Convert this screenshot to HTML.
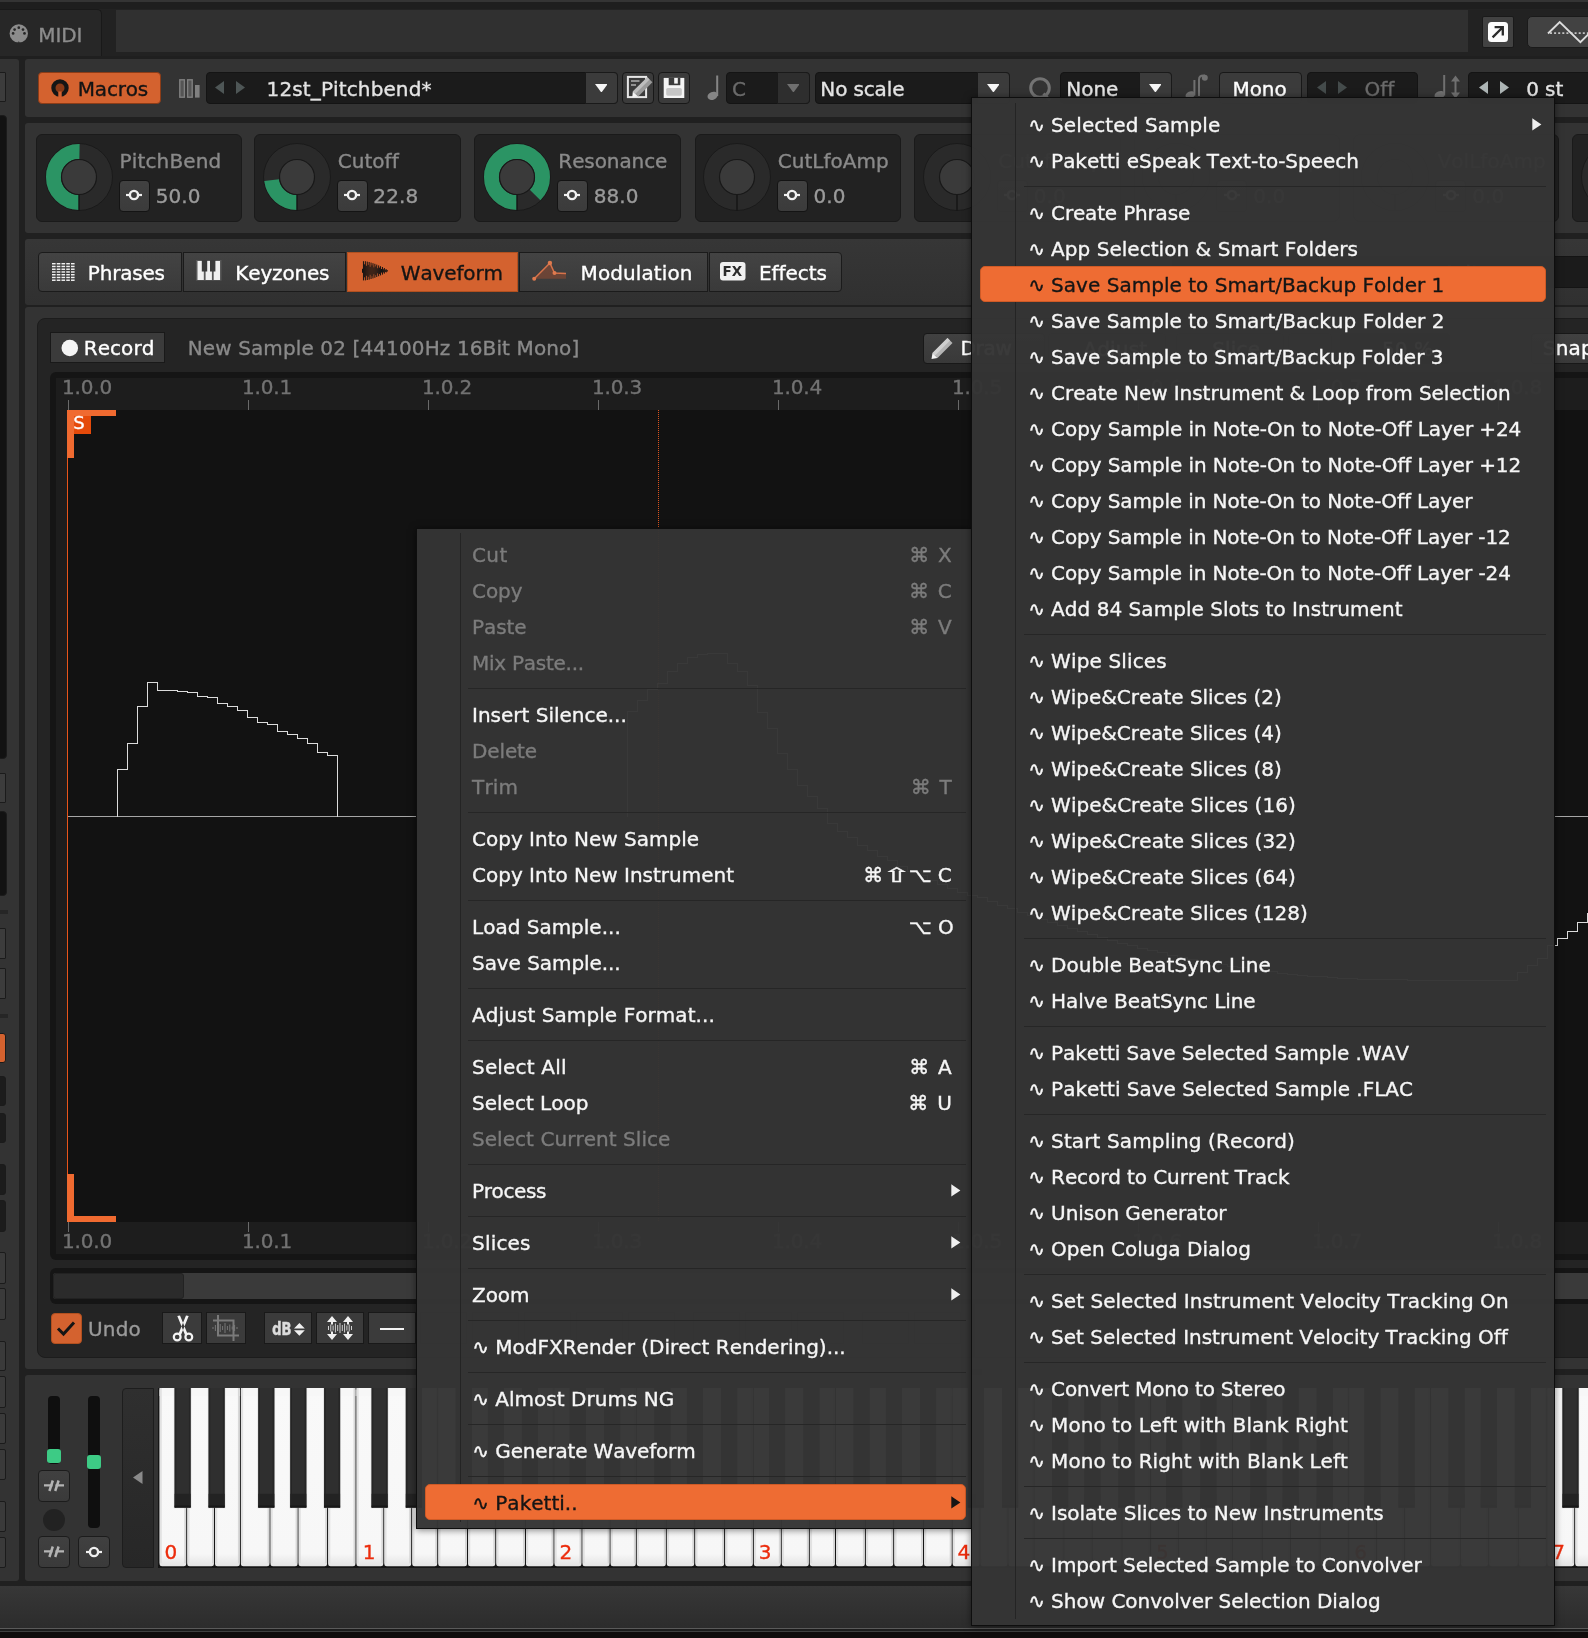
<!DOCTYPE html>
<html><head><meta charset="utf-8"><title>Renoise Sample Editor</title>
<style>
html,body{margin:0;padding:0;background:#202020;}
body{width:1588px;height:1638px;position:relative;overflow:hidden;font-family:"DejaVu Sans","Liberation Sans",sans-serif;}
#root{position:absolute;left:0;top:0;width:1588px;height:1638px;overflow:hidden;will-change:transform;-webkit-font-smoothing:antialiased;}
#root div,#root span,#root svg{position:absolute;box-sizing:border-box;}
.t{white-space:pre;line-height:24px;font-size:20px;font-kerning:none;-webkit-text-stroke:0.35px;}
.menu{background:rgba(52,52,52,0.972);border:1px solid #0e0e0e;box-shadow:0 1px 7px rgba(0,0,0,0.5);}
.sep{height:1px;background:#262626;}
</style></head><body><div id="root">

<div style="left:0px;top:0px;width:1588px;height:2px;background:#343434;"></div>
<div style="left:0px;top:2px;width:1588px;height:7px;background:#1e1e1e;"></div>
<div style="left:0px;top:9px;width:1588px;height:50px;background:#222222;"></div>
<div style="left:0px;top:56px;width:1588px;height:3px;background:#1f1f1f;"></div>
<div style="left:-2px;top:9px;width:103.5px;height:47px;background:#272727;border:1px solid #191919;border-bottom:none;border-radius:0 5px 0 0;"></div>
<svg style="left:8px;top:23px;" width="22" height="22" viewBox="0 0 22 22"><circle cx="10.8" cy="10.4" r="9.2" fill="#8c8c8c"/><path d="M9.6 19.8 L10.8 18.2 L12 19.8 Z" fill="#272727"/><circle cx="5.1" cy="10.4" r="1.35" fill="#272727"/><circle cx="6.6" cy="6.6" r="1.35" fill="#272727"/><circle cx="10.8" cy="4.7" r="1.35" fill="#272727"/><circle cx="15.0" cy="6.6" r="1.35" fill="#272727"/><circle cx="16.5" cy="10.4" r="1.35" fill="#272727"/></svg>
<span class="t" style="left:38.34px;top:23.08px;color:#8c8c8c;font-size:20px;letter-spacing:-0.113px;">MIDI</span>
<div style="left:116px;top:10px;width:1352px;height:42px;background:#303030;"></div>
<div style="left:1482.3px;top:16px;width:31.7px;height:32px;background:#424242;border:1px solid #1a1a1a;border-radius:2px;"></div>
<svg style="left:1487px;top:21px;" width="22" height="22" viewBox="0 0 22 22"><rect x="1" y="1" width="20" height="20" rx="3.5" fill="#fcfcfc"/><path d="M5.6 16.4 L15 7 M7.6 6.2 H15.8 V14.4" stroke="#2a2a2a" stroke-width="2.3" fill="none"/></svg>
<div style="left:1526.5px;top:16px;width:70px;height:32px;background:#424242;border:1px solid #1a1a1a;border-radius:5px;"></div>
<svg style="left:1545px;top:20px;" width="43" height="26" viewBox="0 0 43 26"><path d="M5 13.2 H43" stroke="#c4c4c4" stroke-width="1.8" stroke-dasharray="2 2.1"/><path d="M3 13.5 L14.7 2 L35.4 22.2 L43.5 14.3" stroke="#dcdcdc" stroke-width="1.9" fill="none"/></svg>
<div style="left:-2px;top:59px;width:21px;height:1521.5px;background:#333333;border-radius:0 3px 3px 0;"></div>
<div style="left:-3px;top:72px;width:9px;height:30px;background:#3c3c3c;border-radius:1px;border:1px solid #1b1b1b;"></div>
<div style="left:-3px;top:115px;width:10px;height:644px;background:#121212;border-radius:4px;border:1px solid #1b1b1b;"></div>
<div style="left:-3px;top:772.5px;width:9px;height:30.0px;background:#3c3c3c;border-radius:1px;border:1px solid #1b1b1b;"></div>
<div style="left:-3px;top:811px;width:10px;height:85px;background:#121212;border-radius:4px;border:1px solid #1b1b1b;"></div>
<div style="left:0px;top:910px;width:8px;height:4px;background:#262626;"></div>
<div style="left:-3px;top:928px;width:9px;height:31px;background:#3c3c3c;border-radius:1px;border:1px solid #1b1b1b;"></div>
<div style="left:-3px;top:968px;width:9px;height:31px;background:#3c3c3c;border-radius:1px;border:1px solid #1b1b1b;"></div>
<div style="left:0px;top:1014px;width:8px;height:4px;background:#262626;"></div>
<div style="left:-3px;top:1032.5px;width:8.5px;height:30.0px;background:#d4622f;border-radius:3px;border:1px solid #1b1b1b;"></div>
<div style="left:-3px;top:1076px;width:9px;height:30px;background:#1c1c1c;border-radius:3px;border:1px solid #1b1b1b;"></div>
<div style="left:-3px;top:1113px;width:9px;height:30px;background:#1c1c1c;border-radius:3px;border:1px solid #1b1b1b;"></div>
<div style="left:-3px;top:1164px;width:9px;height:31px;background:#1c1c1c;border-radius:3px;border:1px solid #1b1b1b;"></div>
<div style="left:-3px;top:1200px;width:9px;height:31.5px;background:#1c1c1c;border-radius:3px;border:1px solid #1b1b1b;"></div>
<div style="left:-3px;top:1252px;width:8.5px;height:31.5px;background:#3a3a3a;border-radius:2px;border:1px solid #1b1b1b;"></div>
<div style="left:-3px;top:1288px;width:8.5px;height:32px;background:#3a3a3a;border-radius:2px;border:1px solid #1b1b1b;"></div>
<div style="left:-3px;top:1341px;width:8.5px;height:30px;background:#3a3a3a;border-radius:2px;border:1px solid #1b1b1b;"></div>
<div style="left:-3px;top:1376px;width:8.5px;height:31.5px;background:#3a3a3a;border-radius:2px;border:1px solid #1b1b1b;"></div>
<div style="left:-3px;top:1412.5px;width:8.5px;height:31.5px;background:#3a3a3a;border-radius:2px;border:1px solid #1b1b1b;"></div>
<div style="left:-3px;top:1449px;width:8.5px;height:31px;background:#3a3a3a;border-radius:2px;border:1px solid #1b1b1b;"></div>
<div style="left:-3px;top:1500.5px;width:8.5px;height:31.0px;background:#3a3a3a;border-radius:2px;border:1px solid #1b1b1b;"></div>
<div style="left:-3px;top:1537px;width:8.5px;height:31px;background:#3a3a3a;border-radius:2px;border:1px solid #1b1b1b;"></div>
<div style="left:25px;top:59px;width:1570px;height:58px;background:#333333;border-radius:3px 0 0 3px;"></div>
<div style="left:25px;top:123px;width:1570px;height:110px;background:#333333;border-radius:3px 0 0 3px;"></div>
<div style="left:25px;top:239px;width:1570px;height:66.2px;background:linear-gradient(#363636,#303030);border-radius:3px 0 0 3px;"></div>
<div style="left:25px;top:306.8px;width:1570px;height:1062.2px;background:#333333;border-radius:3px 0 0 3px;"></div>
<div style="left:25px;top:1375px;width:1570px;height:205.5px;background:#333333;border-radius:3px 0 0 3px;"></div>
<div style="left:0px;top:1585.6px;width:1588px;height:42.6px;background:linear-gradient(#373737,#2c2c2c);"></div>
<div style="left:0px;top:1628px;width:1588px;height:1.4px;background:#5a5a5a;"></div>
<div style="left:0px;top:1629.4px;width:1588px;height:1.6px;background:#1c1c1c;"></div>
<div style="left:0px;top:1631px;width:1588px;height:1.3px;background:#404040;"></div>
<div style="left:0px;top:1632.3px;width:1588px;height:6px;background:#100c0c;"></div>
<div style="left:38.3px;top:72px;width:123px;height:31.6px;background:#d4622f;border-radius:4px;border:1px solid #8c3c17;"></div>
<svg style="left:50px;top:78px;" width="20" height="22" viewBox="0 0 20 22"><circle cx="10" cy="10" r="6.6" fill="#8a3a17" stroke="#151515" stroke-width="4.2"/><rect x="8.3" y="13.5" width="3.4" height="6.5" fill="#d4622f"/></svg>
<span class="t" style="left:77.84px;top:77.08px;color:#141414;font-size:20px;letter-spacing:-0.231px;">Macros</span>
<svg style="left:179px;top:79px;" width="22" height="20" viewBox="0 0 22 20"><rect x="0.8" y="0.8" width="4.6" height="17.4" fill="#555" stroke="#808080" stroke-width="1.4"/><rect x="8.6" y="0.8" width="4.6" height="17.4" fill="#555" stroke="#808080" stroke-width="1.4"/><rect x="16" y="6" width="4.6" height="12.6" fill="#808080"/></svg>
<div style="left:206px;top:72px;width:412px;height:32px;background:#1b1b1b;border-radius:4px;border:1px solid #141414;"></div>
<svg style="left:215px;top:81.0px;" width="9" height="13" viewBox="0 0 9 13"><path d="M9 0 L0 6.5 L9 13 Z" fill="#4e5656"/></svg>
<svg style="left:235.5px;top:81.0px;" width="9" height="13" viewBox="0 0 9 13"><path d="M0 0 L9 6.5 L0 13 Z" fill="#4e5656"/></svg>
<span class="t" style="left:266.6px;top:77.08px;color:#e4e4e4;font-size:20px;letter-spacing:0.119px;">12st_Pitchbend*</span>
<div style="left:585.3px;top:72px;width:32.7px;height:32px;background:#3b3b3b;border-radius:0 4px 4px 0;border:1px solid #1a1a1a;"></div>
<svg style="left:594.6px;top:83.8px;" width="12.8" height="8.6" viewBox="0 0 12.8 8.6"><path d="M0 0 H12.8 L6.4 8.6 Z" fill="#f6f6f6"/></svg>
<div style="left:621.8px;top:72px;width:32.2px;height:32px;background:#3b3b3b;border-radius:4px;border:1px solid #181818;"></div>
<svg style="left:626px;top:75px;" width="27" height="25" viewBox="0 0 27 25"><rect x="1.9" y="1.9" width="18.2" height="20.2" fill="#3a3a3a" stroke="#e6e6e6" stroke-width="2"/><path d="M5 6 H13.5 M5 10 H10" stroke="#b0b0b0" stroke-width="1.7"/><path d="M21.3 2.2 L26.4 7.3 L12.2 21.5 L6.8 16.4 Z" fill="#9a9a9a"/><path d="M21.3 2.2 L23.6 4.5 L9.4 18.7 L6.8 16.4 Z" fill="#bdbdbd"/><path d="M6.8 16.4 L12.2 21.5 L6.3 22.2 Z" fill="#f4f4f4"/></svg>
<div style="left:657.6px;top:72px;width:32.4px;height:32px;background:#3b3b3b;border-radius:4px;border:1px solid #181818;"></div>
<svg style="left:663px;top:77px;" width="22" height="22" viewBox="0 0 22 22"><path d="M0.7 0.9 H21.3 V21 H0.7 Z" fill="#f4f4f4"/><rect x="5.7" y="0.9" width="11.6" height="7.3" fill="#3b3b3b"/><rect x="11.2" y="0.9" width="3.6" height="5.7" fill="#f4f4f4"/><rect x="3.2" y="11" width="15.6" height="7.7" rx="1.6" fill="#c6c6c6"/></svg>
<svg style="left:707px;top:74.5px;" width="16" height="26" viewBox="0 0 16 26"><ellipse cx="5.6" cy="20.8" rx="5.2" ry="3.9" transform="rotate(-22 5.6 20.8)" fill="#858585"/><rect x="9.2" y="0.5" width="2" height="20.5" fill="#858585"/></svg>
<div style="left:726px;top:72px;width:84px;height:32px;background:#1b1b1b;border-radius:4px;border:1px solid #141414;"></div>
<span class="t" style="left:731.88px;top:77.08px;color:#6a6a6a;font-size:20px;letter-spacing:0.035px;">C</span>
<div style="left:777.4px;top:72px;width:32.6px;height:32px;background:#2e2e2e;border-radius:0 4px 4px 0;border:1px solid #1a1a1a;"></div>
<svg style="left:786.6px;top:83.8px;" width="12.8" height="8.6" viewBox="0 0 12.8 8.6"><path d="M0 0 H12.8 L6.4 8.6 Z" fill="#707070"/></svg>
<div style="left:814.5px;top:72px;width:195.5px;height:32px;background:#1b1b1b;border-radius:4px;border:1px solid #141414;"></div>
<span class="t" style="left:820.34px;top:77.08px;color:#e4e4e4;font-size:20px;letter-spacing:-0.136px;">No scale</span>
<div style="left:977.4px;top:72px;width:32.6px;height:32px;background:#3b3b3b;border-radius:0 4px 4px 0;border:1px solid #1a1a1a;"></div>
<svg style="left:986.6px;top:83.8px;" width="12.8" height="8.6" viewBox="0 0 12.8 8.6"><path d="M0 0 H12.8 L6.4 8.6 Z" fill="#f6f6f6"/></svg>
<svg style="left:1028px;top:76px;" width="26" height="26" viewBox="0 0 26 26"><circle cx="12" cy="12" r="9.3" stroke="#737373" stroke-width="3" fill="none"/><path d="M15.5 17.5 L22 24.5" stroke="#737373" stroke-width="3"/></svg>
<div style="left:1060px;top:72px;width:112px;height:32px;background:#1b1b1b;border-radius:4px;border:1px solid #141414;"></div>
<span class="t" style="left:1066.34px;top:77.08px;color:#e4e4e4;font-size:20px;letter-spacing:-0.044px;">None</span>
<div style="left:1139.4px;top:72px;width:32.6px;height:32px;background:#3b3b3b;border-radius:0 4px 4px 0;border:1px solid #1a1a1a;"></div>
<svg style="left:1148.6px;top:83.8px;" width="12.8" height="8.6" viewBox="0 0 12.8 8.6"><path d="M0 0 H12.8 L6.4 8.6 Z" fill="#f6f6f6"/></svg>
<svg style="left:1185px;top:74px;" width="26" height="28" viewBox="0 0 26 28"><ellipse cx="5.2" cy="21" rx="4.8" ry="3.6" transform="rotate(-22 5.2 21)" fill="#707070"/><rect x="8.4" y="6" width="2" height="15.5" fill="#707070"/><path d="M14 22 V5.5 Q14 1.5 18.5 1.5 H20" stroke="#707070" stroke-width="2" fill="none"/><circle cx="19.8" cy="3.8" r="3" fill="#707070"/></svg>
<div style="left:1218.5px;top:72px;width:83.5px;height:32px;background:#3b3b3b;border-radius:4px;border:1px solid #181818;"></div>
<span class="t" style="left:1232.54px;top:77.08px;color:#ffffff;font-size:20px;letter-spacing:-0.101px;">Mono</span>
<div style="left:1307px;top:72px;width:111px;height:32px;background:#1b1b1b;border-radius:4px;border:1px solid #141414;"></div>
<svg style="left:1317px;top:81.0px;" width="9" height="13" viewBox="0 0 9 13"><path d="M9 0 L0 6.5 L9 13 Z" fill="#444b4b"/></svg>
<svg style="left:1337.5px;top:81.0px;" width="9" height="13" viewBox="0 0 9 13"><path d="M0 0 L9 6.5 L0 13 Z" fill="#444b4b"/></svg>
<span class="t" style="left:1364.38px;top:77.08px;color:#6a6a6a;font-size:20px;letter-spacing:0.059px;">Off</span>
<svg style="left:1434px;top:74px;" width="30" height="28" viewBox="0 0 30 28"><ellipse cx="5.6" cy="21" rx="5.2" ry="3.9" transform="rotate(-22 5.6 21)" fill="#707070"/><rect x="9.2" y="1" width="2" height="20.5" fill="#707070"/><path d="M21.5 4 V22" stroke="#707070" stroke-width="2"/><path d="M17 7.5 L21.5 1.5 L26 7.5 Z M17 18.5 L21.5 24.5 L26 18.5 Z" fill="#707070"/></svg>
<div style="left:1468px;top:72px;width:130px;height:32px;background:#1b1b1b;border-radius:4px;border:1px solid #141414;"></div>
<svg style="left:1479px;top:81.0px;" width="9" height="13" viewBox="0 0 9 13"><path d="M9 0 L0 6.5 L9 13 Z" fill="#aeb6b6"/></svg>
<svg style="left:1499.5px;top:81.0px;" width="9" height="13" viewBox="0 0 9 13"><path d="M0 0 L9 6.5 L0 13 Z" fill="#aeb6b6"/></svg>
<span class="t" style="left:1526.18px;top:77.08px;color:#e4e4e4;font-size:20px;letter-spacing:-0.086px;">0 st</span>
<div style="left:36.2px;top:133.8px;width:205.8px;height:88px;background:#222222;border-radius:6px;border:1px solid #1a1a1a;"></div>
<svg style="left:38.8px;top:136.7px;" width="80" height="80" viewBox="0 0 80 80"><circle cx="40" cy="40" r="33.5" fill="#2a2a2a" stroke="#1a1a1a" stroke-width="1"/><circle cx="40" cy="40" r="25.5" fill="none" stroke="#2b9464" stroke-width="15.0" stroke-dasharray="80.11 160.22" transform="rotate(90 40 40)"/><path d="M40 57.5 V73.5" stroke="#151515" stroke-width="1.4"/><circle cx="40" cy="40" r="17.5" fill="#3a3a3a" stroke="#181818" stroke-width="1.2"/></svg>
<span class="t" style="left:119.44px;top:149.08px;color:#8a8a8a;font-size:20px;letter-spacing:0.164px;">PitchBend</span>
<div style="left:118.5px;top:180.3px;width:31.2px;height:31.3px;background:linear-gradient(#414141,#3b3b3b);border-radius:4px;border:1px solid #141414;"></div>
<svg style="left:123.1px;top:187.9px;" width="22" height="14" viewBox="0 0 22 14"><path d="M3 7 H19" stroke="#f0f0f0" stroke-width="2.2"/><circle cx="11" cy="7" r="4.1" fill="#3b3b3b" stroke="#f0f0f0" stroke-width="2.4"/></svg>
<span class="t" style="left:155.66px;top:184.08px;color:#9a9a9a;font-size:20px;letter-spacing:0.117px;">50.0</span>
<div style="left:254.2px;top:133.8px;width:207.3px;height:88px;background:#222222;border-radius:6px;border:1px solid #1a1a1a;"></div>
<svg style="left:256.8px;top:136.7px;" width="80" height="80" viewBox="0 0 80 80"><circle cx="40" cy="40" r="33.5" fill="#2a2a2a" stroke="#1a1a1a" stroke-width="1"/><circle cx="40" cy="40" r="25.5" fill="none" stroke="#2b9464" stroke-width="15.0" stroke-dasharray="36.53 160.22" transform="rotate(90 40 40)"/><path d="M40 57.5 V73.5" stroke="#151515" stroke-width="1.4"/><circle cx="40" cy="40" r="17.5" fill="#3a3a3a" stroke="#181818" stroke-width="1.2"/></svg>
<span class="t" style="left:337.78px;top:149.08px;color:#8a8a8a;font-size:20px;letter-spacing:0.033px;">Cutoff</span>
<div style="left:336.5px;top:180.3px;width:31.2px;height:31.3px;background:linear-gradient(#414141,#3b3b3b);border-radius:4px;border:1px solid #141414;"></div>
<svg style="left:341.1px;top:187.9px;" width="22" height="14" viewBox="0 0 22 14"><path d="M3 7 H19" stroke="#f0f0f0" stroke-width="2.2"/><circle cx="11" cy="7" r="4.1" fill="#3b3b3b" stroke="#f0f0f0" stroke-width="2.4"/></svg>
<span class="t" style="left:373.34px;top:184.08px;color:#9a9a9a;font-size:20px;letter-spacing:0.117px;">22.8</span>
<div style="left:474.2px;top:133.8px;width:206.8px;height:88px;background:#222222;border-radius:6px;border:1px solid #1a1a1a;"></div>
<svg style="left:476.79999999999995px;top:136.7px;" width="80" height="80" viewBox="0 0 80 80"><circle cx="40" cy="40" r="33.5" fill="#2a2a2a" stroke="#1a1a1a" stroke-width="1"/><circle cx="40" cy="40" r="25.5" fill="none" stroke="#2b9464" stroke-width="15.0" stroke-dasharray="139.23 160.22" transform="rotate(90 40 40)"/><path d="M40 57.5 V73.5" stroke="#151515" stroke-width="1.4"/><circle cx="40" cy="40" r="17.5" fill="#3a3a3a" stroke="#181818" stroke-width="1.2"/></svg>
<span class="t" style="left:558.34px;top:149.08px;color:#8a8a8a;font-size:20px;letter-spacing:-0.085px;">Resonance</span>
<div style="left:556.5px;top:180.3px;width:31.2px;height:31.3px;background:linear-gradient(#414141,#3b3b3b);border-radius:4px;border:1px solid #141414;"></div>
<svg style="left:561.1px;top:187.9px;" width="22" height="14" viewBox="0 0 22 14"><path d="M3 7 H19" stroke="#f0f0f0" stroke-width="2.2"/><circle cx="11" cy="7" r="4.1" fill="#3b3b3b" stroke="#f0f0f0" stroke-width="2.4"/></svg>
<span class="t" style="left:593.64px;top:184.08px;color:#9a9a9a;font-size:20px;letter-spacing:0.117px;">88.0</span>
<div style="left:694.5px;top:133.8px;width:206.8px;height:88px;background:#222222;border-radius:6px;border:1px solid #1a1a1a;"></div>
<svg style="left:697.0999999999999px;top:136.7px;" width="80" height="80" viewBox="0 0 80 80"><circle cx="40" cy="40" r="33.5" fill="#2a2a2a" stroke="#1a1a1a" stroke-width="1"/><path d="M40 57.5 V73.5" stroke="#151515" stroke-width="1.4"/><circle cx="40" cy="40" r="17.5" fill="#3a3a3a" stroke="#181818" stroke-width="1.2"/></svg>
<span class="t" style="left:777.78px;top:149.08px;color:#8a8a8a;font-size:20px;letter-spacing:0.026px;">CutLfoAmp</span>
<div style="left:776.8px;top:180.3px;width:31.2px;height:31.3px;background:linear-gradient(#414141,#3b3b3b);border-radius:4px;border:1px solid #141414;"></div>
<svg style="left:781.4px;top:187.9px;" width="22" height="14" viewBox="0 0 22 14"><path d="M3 7 H19" stroke="#f0f0f0" stroke-width="2.2"/><circle cx="11" cy="7" r="4.1" fill="#3b3b3b" stroke="#f0f0f0" stroke-width="2.4"/></svg>
<span class="t" style="left:813.58px;top:184.08px;color:#9a9a9a;font-size:20px;letter-spacing:0.064px;">0.0</span>
<div style="left:914.2px;top:133.8px;width:206.8px;height:88px;background:#222222;border-radius:6px;border:1px solid #1a1a1a;"></div>
<svg style="left:916.8px;top:136.7px;" width="80" height="80" viewBox="0 0 80 80"><circle cx="40" cy="40" r="33.5" fill="#2a2a2a" stroke="#1a1a1a" stroke-width="1"/><path d="M40 57.5 V73.5" stroke="#151515" stroke-width="1.4"/><circle cx="40" cy="40" r="17.5" fill="#3a3a3a" stroke="#181818" stroke-width="1.2"/></svg>
<span class="t" style="left:998.18px;top:149.08px;color:#8a8a8a;font-size:20px;letter-spacing:0.075px;">CutLfoFrq</span>
<div style="left:996.5px;top:180.3px;width:31.2px;height:31.3px;background:linear-gradient(#414141,#3b3b3b);border-radius:4px;border:1px solid #141414;"></div>
<svg style="left:1001.1px;top:187.9px;" width="22" height="14" viewBox="0 0 22 14"><path d="M3 7 H19" stroke="#f0f0f0" stroke-width="2.2"/><circle cx="11" cy="7" r="4.1" fill="#3b3b3b" stroke="#f0f0f0" stroke-width="2.4"/></svg>
<span class="t" style="left:1033.68px;top:184.08px;color:#9a9a9a;font-size:20px;letter-spacing:0.064px;">0.0</span>
<div style="left:1133.7px;top:133.8px;width:206.8px;height:88px;background:#222222;border-radius:6px;border:1px solid #1a1a1a;"></div>
<svg style="left:1136.3px;top:136.7px;" width="80" height="80" viewBox="0 0 80 80"><circle cx="40" cy="40" r="33.5" fill="#2a2a2a" stroke="#1a1a1a" stroke-width="1"/><path d="M40 57.5 V73.5" stroke="#151515" stroke-width="1.4"/><circle cx="40" cy="40" r="17.5" fill="#3a3a3a" stroke="#181818" stroke-width="1.2"/></svg>
<span class="t" style="left:1218.64px;top:149.08px;color:#8a8a8a;font-size:20px;letter-spacing:0.076px;">VolLfoFrq</span>
<div style="left:1216.0px;top:180.3px;width:31.2px;height:31.3px;background:linear-gradient(#414141,#3b3b3b);border-radius:4px;border:1px solid #141414;"></div>
<svg style="left:1220.6px;top:187.9px;" width="22" height="14" viewBox="0 0 22 14"><path d="M3 7 H19" stroke="#f0f0f0" stroke-width="2.2"/><circle cx="11" cy="7" r="4.1" fill="#3b3b3b" stroke="#f0f0f0" stroke-width="2.4"/></svg>
<span class="t" style="left:1253.18px;top:184.08px;color:#9a9a9a;font-size:20px;letter-spacing:0.064px;">0.0</span>
<div style="left:1352.7px;top:133.8px;width:206.8px;height:88px;background:#222222;border-radius:6px;border:1px solid #1a1a1a;"></div>
<svg style="left:1355.3px;top:136.7px;" width="80" height="80" viewBox="0 0 80 80"><circle cx="40" cy="40" r="33.5" fill="#2a2a2a" stroke="#1a1a1a" stroke-width="1"/><path d="M40 57.5 V73.5" stroke="#151515" stroke-width="1.4"/><circle cx="40" cy="40" r="17.5" fill="#3a3a3a" stroke="#181818" stroke-width="1.2"/></svg>
<span class="t" style="left:1437.64px;top:149.08px;color:#8a8a8a;font-size:20px;letter-spacing:0.027px;">VolLfoAmp</span>
<div style="left:1435.0px;top:180.3px;width:31.2px;height:31.3px;background:linear-gradient(#414141,#3b3b3b);border-radius:4px;border:1px solid #141414;"></div>
<svg style="left:1439.6px;top:187.9px;" width="22" height="14" viewBox="0 0 22 14"><path d="M3 7 H19" stroke="#f0f0f0" stroke-width="2.2"/><circle cx="11" cy="7" r="4.1" fill="#3b3b3b" stroke="#f0f0f0" stroke-width="2.4"/></svg>
<span class="t" style="left:1472.18px;top:184.08px;color:#9a9a9a;font-size:20px;letter-spacing:0.064px;">0.0</span>
<div style="left:1572.2px;top:133.8px;width:206.8px;height:88px;background:#222222;border-radius:6px;border:1px solid #1a1a1a;"></div>
<svg style="left:1574.8px;top:136.7px;" width="80" height="80" viewBox="0 0 80 80"><circle cx="40" cy="40" r="33.5" fill="#2a2a2a" stroke="#1a1a1a" stroke-width="1"/><path d="M40 57.5 V73.5" stroke="#151515" stroke-width="1.4"/><circle cx="40" cy="40" r="17.5" fill="#3a3a3a" stroke="#181818" stroke-width="1.2"/></svg>
<span class="t" style="left:1655.34px;top:149.08px;color:#8a8a8a;font-size:20px;letter-spacing:-0.064px;">Drive</span>
<div style="left:1654.5px;top:180.3px;width:31.2px;height:31.3px;background:linear-gradient(#414141,#3b3b3b);border-radius:4px;border:1px solid #141414;"></div>
<svg style="left:1659.1px;top:187.9px;" width="22" height="14" viewBox="0 0 22 14"><path d="M3 7 H19" stroke="#f0f0f0" stroke-width="2.2"/><circle cx="11" cy="7" r="4.1" fill="#3b3b3b" stroke="#f0f0f0" stroke-width="2.4"/></svg>
<span class="t" style="left:1691.68px;top:184.08px;color:#9a9a9a;font-size:20px;letter-spacing:0.064px;">0.0</span>
<div style="left:38px;top:251.8px;width:143.5px;height:40.2px;background:linear-gradient(#434343,#3a3a3a);border-radius:4px 0 0 4px;border:1px solid #1b1b1b;"></div>
<div style="left:182.5px;top:251.8px;width:163.5px;height:40.2px;background:linear-gradient(#434343,#3a3a3a);border:1px solid #1b1b1b;"></div>
<div style="left:346.5px;top:251.8px;width:171.5px;height:40.2px;background:#d4622f;border:1px solid #b2501f;"></div>
<div style="left:518.5px;top:251.8px;width:189px;height:40.2px;background:linear-gradient(#434343,#3a3a3a);border:1px solid #1b1b1b;"></div>
<div style="left:708.5px;top:251.8px;width:133px;height:40.2px;background:linear-gradient(#434343,#3a3a3a);border-radius:0 4px 4px 0;border:1px solid #1b1b1b;"></div>
<svg style="left:51.8px;top:262.9px;" width="24" height="20" viewBox="0 0 24 20"><rect x="0.00" y="0.00" width="3.6" height="1.45" fill="#f2f2f2"/><rect x="4.75" y="0.00" width="3.6" height="1.45" fill="#f2f2f2"/><rect x="9.50" y="0.00" width="3.6" height="1.45" fill="#f2f2f2"/><rect x="14.25" y="0.00" width="3.6" height="1.45" fill="#f2f2f2"/><rect x="19.00" y="0.00" width="3.6" height="1.45" fill="#f2f2f2"/><rect x="0.00" y="2.75" width="3.6" height="1.45" fill="#f2f2f2"/><rect x="4.75" y="2.75" width="3.6" height="1.45" fill="#f2f2f2"/><rect x="9.50" y="2.75" width="3.6" height="1.45" fill="#f2f2f2"/><rect x="14.25" y="2.75" width="3.6" height="1.45" fill="#f2f2f2"/><rect x="19.00" y="2.75" width="3.6" height="1.45" fill="#f2f2f2"/><rect x="0.00" y="5.50" width="3.6" height="1.45" fill="#f2f2f2"/><rect x="4.75" y="5.50" width="3.6" height="1.45" fill="#f2f2f2"/><rect x="9.50" y="5.50" width="3.6" height="1.45" fill="#f2f2f2"/><rect x="14.25" y="5.50" width="3.6" height="1.45" fill="#f2f2f2"/><rect x="19.00" y="5.50" width="3.6" height="1.45" fill="#f2f2f2"/><rect x="0.00" y="8.25" width="3.6" height="1.45" fill="#f2f2f2"/><rect x="4.75" y="8.25" width="3.6" height="1.45" fill="#f2f2f2"/><rect x="9.50" y="8.25" width="3.6" height="1.45" fill="#f2f2f2"/><rect x="14.25" y="8.25" width="3.6" height="1.45" fill="#f2f2f2"/><rect x="19.00" y="8.25" width="3.6" height="1.45" fill="#f2f2f2"/><rect x="0.00" y="11.00" width="3.6" height="1.45" fill="#f2f2f2"/><rect x="4.75" y="11.00" width="3.6" height="1.45" fill="#f2f2f2"/><rect x="9.50" y="11.00" width="3.6" height="1.45" fill="#f2f2f2"/><rect x="14.25" y="11.00" width="3.6" height="1.45" fill="#f2f2f2"/><rect x="19.00" y="11.00" width="3.6" height="1.45" fill="#f2f2f2"/><rect x="0.00" y="13.75" width="3.6" height="1.45" fill="#f2f2f2"/><rect x="4.75" y="13.75" width="3.6" height="1.45" fill="#f2f2f2"/><rect x="9.50" y="13.75" width="3.6" height="1.45" fill="#f2f2f2"/><rect x="14.25" y="13.75" width="3.6" height="1.45" fill="#f2f2f2"/><rect x="19.00" y="13.75" width="3.6" height="1.45" fill="#f2f2f2"/><rect x="0.00" y="16.50" width="3.6" height="1.45" fill="#f2f2f2"/><rect x="4.75" y="16.50" width="3.6" height="1.45" fill="#f2f2f2"/><rect x="9.50" y="16.50" width="3.6" height="1.45" fill="#f2f2f2"/><rect x="14.25" y="16.50" width="3.6" height="1.45" fill="#f2f2f2"/><rect x="19.00" y="16.50" width="3.6" height="1.45" fill="#f2f2f2"/></svg>
<span class="t" style="left:87.84px;top:261.08px;color:#ffffff;font-size:20px;letter-spacing:-0.194px;">Phrases</span>
<svg style="left:196px;top:260px;" width="26" height="22" viewBox="0 0 26 22"><rect x="0" y="0" width="25.5" height="20.6" fill="#595959"/><rect x="1.5" y="1" width="6.3" height="19" fill="#f0f0f0"/><rect x="9.6" y="1" width="6.3" height="19" fill="#f0f0f0"/><rect x="17.7" y="1" width="6.3" height="19" fill="#f0f0f0"/><rect x="5.8" y="0" width="5.4" height="11.5" fill="#3b3b3b"/><rect x="14" y="0" width="5.4" height="11.5" fill="#3b3b3b"/></svg>
<span class="t" style="left:235.34px;top:261.08px;color:#ffffff;font-size:20px;letter-spacing:-0.174px;">Keyzones</span>
<svg style="left:362px;top:261.3px;" width="27" height="21" viewBox="0 0 27 21"><rect x="0.00" y="7.8" width="1.0" height="4.0" fill="#131313"/><rect x="0.95" y="0.2" width="1.0" height="19.2" fill="#131313"/><rect x="1.90" y="3.3" width="1.0" height="13.0" fill="#131313"/><rect x="2.85" y="0.2" width="1.0" height="19.2" fill="#131313"/><rect x="3.80" y="4.8" width="1.0" height="10.0" fill="#131313"/><rect x="4.75" y="0.6" width="1.0" height="18.4" fill="#131313"/><rect x="5.70" y="3.8" width="1.0" height="12.0" fill="#131313"/><rect x="6.65" y="1.0" width="1.0" height="17.6" fill="#131313"/><rect x="7.60" y="5.8" width="1.0" height="8.0" fill="#131313"/><rect x="8.55" y="1.6" width="1.0" height="16.4" fill="#131313"/><rect x="9.50" y="4.4" width="1.0" height="10.8" fill="#131313"/><rect x="10.45" y="2.2" width="1.0" height="15.2" fill="#131313"/><rect x="11.40" y="6.4" width="1.0" height="6.8" fill="#131313"/><rect x="12.35" y="2.8" width="1.0" height="14.0" fill="#131313"/><rect x="13.30" y="5.4" width="1.0" height="8.8" fill="#131313"/><rect x="14.25" y="3.6" width="1.0" height="12.4" fill="#131313"/><rect x="15.20" y="7.2" width="1.0" height="5.2" fill="#131313"/><rect x="16.15" y="4.4" width="1.0" height="10.8" fill="#131313"/><rect x="17.10" y="6.6" width="1.0" height="6.4" fill="#131313"/><rect x="18.05" y="5.2" width="1.0" height="9.2" fill="#131313"/><rect x="19.00" y="8.0" width="1.0" height="3.6" fill="#131313"/><rect x="19.95" y="6.0" width="1.0" height="7.6" fill="#131313"/><rect x="20.90" y="8.2" width="1.0" height="3.2" fill="#131313"/><rect x="21.85" y="7.0" width="1.0" height="5.6" fill="#131313"/><rect x="22.80" y="8.6" width="1.0" height="2.4" fill="#131313"/><rect x="23.75" y="8.2" width="1.0" height="3.2" fill="#131313"/><rect x="24.70" y="9.0" width="1.0" height="1.6" fill="#131313"/></svg>
<span class="t" style="left:400.84px;top:261.08px;color:#141414;font-size:20px;letter-spacing:-0.144px;">Waveform</span>
<svg style="left:531px;top:259px;" width="36" height="26" viewBox="0 0 36 26"><path d="M3.2 19.8 L18.9 4 L23.5 14 L35 14.6 V19.8 Z" fill="#8a4a32" opacity="0.6"/><path d="M3.2 19.8 L18.9 4 L23.5 14 L35 14.6" stroke="#d8734a" stroke-width="1.5" fill="none"/><circle cx="3.2" cy="19.8" r="2" fill="#e07a4e"/><circle cx="18.9" cy="4" r="2.2" fill="#e07a4e"/><circle cx="23.5" cy="14" r="2" fill="#e07a4e"/></svg>
<span class="t" style="left:580.54px;top:261.08px;color:#ffffff;font-size:20px;letter-spacing:0.101px;">Modulation</span>
<svg style="left:720px;top:262px;" width="26" height="19" viewBox="0 0 26 19"><rect x="0" y="0" width="25.5" height="18.5" rx="3" fill="#f0f0f0"/><text x="2.6" y="14.3" font-family="DejaVu Sans,sans-serif" font-weight="bold" font-size="13.5" fill="#2a2a2a">FX</text></svg>
<span class="t" style="left:758.94px;top:261.08px;color:#ffffff;font-size:20px;letter-spacing:-0.040px;">Effects</span>
<div style="left:1172px;top:256px;width:430px;height:32px;background:#1b1b1b;border-radius:4px;border:1px solid #141414;"></div>
<span class="t" style="left:1446.54px;top:261.08px;color:#e4e4e4;font-size:20px;letter-spacing:0.257px;">Init</span>
<div style="left:37px;top:318px;width:1570px;height:1040px;background:#242424;border-radius:8px;border:1px solid #1c1c1c;"></div>
<div style="left:50.3px;top:331.8px;width:115px;height:31.4px;background:#3b3b3b;border:1px solid #191919;"></div>
<svg style="left:61px;top:339px;" width="18" height="18" viewBox="0 0 18 18"><circle cx="8.8" cy="9" r="8.3" fill="#f4f4f4"/></svg>
<span class="t" style="left:83.74px;top:336.38px;color:#ffffff;font-size:20px;letter-spacing:0.061px;">Record</span>
<span class="t" style="left:187.74px;top:336.38px;color:#8a8a8a;font-size:20px;letter-spacing:0.117px;">New Sample 02 [44100Hz 16Bit Mono]</span>
<div style="left:922.5px;top:332.8px;width:122px;height:31.4px;background:linear-gradient(#414141,#393939);border-radius:4px;border:1px solid #181818;"></div>
<svg style="left:931px;top:337px;" width="24" height="24" viewBox="0 0 24 24"><path d="M16.5 1 L21.5 6 L6.5 21 L1.5 16 Z" fill="#b4b4b4"/><path d="M16.5 1 L19 3.5 L4 18.5 L1.5 16 Z" fill="#d0d0d0"/><path d="M1.5 16 L6.5 21 L0.5 22 Z" fill="#f4f4f4"/></svg>
<span class="t" style="left:960.54px;top:336.38px;color:#ffffff;font-size:20px;letter-spacing:-0.309px;">Draw</span>
<div style="left:1048px;top:333px;width:118px;height:31px;background:#3b3b3b;border-radius:4px;border:1px solid #181818;"></div>
<span class="t" style="left:1083.34px;top:336.58px;color:#eaeaea;font-size:20px;letter-spacing:0.188px;">Adjust</span>
<div style="left:1176px;top:333px;width:108px;height:31px;background:#3b3b3b;border-radius:4px;border:1px solid #181818;"></div>
<span class="t" style="left:1212.18px;top:336.58px;color:#eaeaea;font-size:20px;letter-spacing:0.178px;">Slice</span>
<div style="left:1288px;top:333px;width:44px;height:31px;background:#3b3b3b;border-radius:4px;border:1px solid #181818;"></div>
<div style="left:1340px;top:333px;width:110px;height:31px;background:#1b1b1b;border-radius:4px;border:1px solid #141414;"></div>
<span class="t" style="left:1381.96px;top:336.58px;color:#e4e4e4;font-size:20px;letter-spacing:0.047px;">50 %</span>
<div style="left:1530.5px;top:332.8px;width:80px;height:31.4px;background:linear-gradient(#414141,#393939);border-radius:4px;border:1px solid #181818;"></div>
<span class="t" style="left:1542.78px;top:336.38px;color:#ffffff;font-size:20px;letter-spacing:0.169px;">Snap</span>
<div style="left:50px;top:371.8px;width:1560px;height:888.5px;background:#151515;border-radius:6px;"></div>
<div style="left:56px;top:378px;width:1560px;height:876px;background:#1d1d1d;"></div>
<div style="left:67px;top:410px;width:1560px;height:812px;background:#121212;"></div>
<div style="left:68px;top:400px;width:1px;height:10px;background:#6a6a6a;"></div>
<div style="left:68px;top:1222px;width:1px;height:10px;background:#6a6a6a;"></div>
<span class="t" style="left:61.9px;top:375.08px;color:#727272;font-size:20px;letter-spacing:-0.128px;">1.0.0</span>
<span class="t" style="left:61.9px;top:1228.68px;color:#727272;font-size:20px;letter-spacing:-0.128px;">1.0.0</span>
<div style="left:248px;top:400px;width:1px;height:10px;background:#6a6a6a;"></div>
<div style="left:248px;top:1222px;width:1px;height:10px;background:#6a6a6a;"></div>
<span class="t" style="left:241.9px;top:375.08px;color:#727272;font-size:20px;letter-spacing:-0.128px;">1.0.1</span>
<span class="t" style="left:241.9px;top:1228.68px;color:#727272;font-size:20px;letter-spacing:-0.128px;">1.0.1</span>
<div style="left:428px;top:400px;width:1px;height:10px;background:#6a6a6a;"></div>
<div style="left:428px;top:1222px;width:1px;height:10px;background:#6a6a6a;"></div>
<span class="t" style="left:421.9px;top:375.08px;color:#727272;font-size:20px;letter-spacing:-0.128px;">1.0.2</span>
<span class="t" style="left:421.9px;top:1228.68px;color:#727272;font-size:20px;letter-spacing:-0.128px;">1.0.2</span>
<div style="left:598px;top:400px;width:1px;height:10px;background:#6a6a6a;"></div>
<div style="left:598px;top:1222px;width:1px;height:10px;background:#6a6a6a;"></div>
<span class="t" style="left:591.9px;top:375.08px;color:#727272;font-size:20px;letter-spacing:-0.128px;">1.0.3</span>
<span class="t" style="left:591.9px;top:1228.68px;color:#727272;font-size:20px;letter-spacing:-0.128px;">1.0.3</span>
<div style="left:778px;top:400px;width:1px;height:10px;background:#6a6a6a;"></div>
<div style="left:778px;top:1222px;width:1px;height:10px;background:#6a6a6a;"></div>
<span class="t" style="left:771.9px;top:375.08px;color:#727272;font-size:20px;letter-spacing:-0.128px;">1.0.4</span>
<span class="t" style="left:771.9px;top:1228.68px;color:#727272;font-size:20px;letter-spacing:-0.128px;">1.0.4</span>
<div style="left:958px;top:400px;width:1px;height:10px;background:#6a6a6a;"></div>
<div style="left:958px;top:1222px;width:1px;height:10px;background:#6a6a6a;"></div>
<span class="t" style="left:951.9px;top:375.08px;color:#727272;font-size:20px;letter-spacing:-0.128px;">1.0.5</span>
<span class="t" style="left:951.9px;top:1228.68px;color:#727272;font-size:20px;letter-spacing:-0.128px;">1.0.5</span>
<div style="left:1138px;top:400px;width:1px;height:10px;background:#6a6a6a;"></div>
<div style="left:1138px;top:1222px;width:1px;height:10px;background:#6a6a6a;"></div>
<span class="t" style="left:1131.9px;top:375.08px;color:#727272;font-size:20px;letter-spacing:-0.128px;">1.0.6</span>
<span class="t" style="left:1131.9px;top:1228.68px;color:#727272;font-size:20px;letter-spacing:-0.128px;">1.0.6</span>
<div style="left:1318px;top:400px;width:1px;height:10px;background:#6a6a6a;"></div>
<div style="left:1318px;top:1222px;width:1px;height:10px;background:#6a6a6a;"></div>
<span class="t" style="left:1311.9px;top:375.08px;color:#727272;font-size:20px;letter-spacing:-0.128px;">1.0.7</span>
<span class="t" style="left:1311.9px;top:1228.68px;color:#727272;font-size:20px;letter-spacing:-0.128px;">1.0.7</span>
<div style="left:1498px;top:400px;width:1px;height:10px;background:#6a6a6a;"></div>
<div style="left:1498px;top:1222px;width:1px;height:10px;background:#6a6a6a;"></div>
<span class="t" style="left:1491.9px;top:375.08px;color:#727272;font-size:20px;letter-spacing:-0.128px;">1.0.8</span>
<span class="t" style="left:1491.9px;top:1228.68px;color:#727272;font-size:20px;letter-spacing:-0.128px;">1.0.8</span>
<svg style="left:67px;top:410px;" width="1540" height="812" viewBox="0 0 1540 812"><path d="M1 406.5 H349 M1487 406.5 H1540" stroke="#a6a6a6" stroke-width="1" fill="none"/><path d="M50.5 406.5 V359.5 H60.5 V333.5 H70.5 V296.5 H80.5 V272.5 H90.5 V280.5 H110.5 V281.5 H120.5 V282.5 H130.5 V286.5 H140.5 V287.5 H150.5 V293.5 H160.5 V296.5 H170.5 V300.5 H180.5 V307.5 H190.5 V312.5 H200.5 V314.5 H210.5 V321.5 H220.5 V324.5 H230.5 V328.5 H240.5 V333.5 H250.5 V342.5 H260.5 V345.5 H270.5 V406.5" stroke="#dcdcdc" stroke-width="1" fill="none" shape-rendering="crispEdges"/><path d="M560.5 406.5 V301.0 H570.5 V290.5 H580.5 V279.5 H590.5 V273.5 H600.5 V261.5 H610.5 V253.5 H620.5 V247.0 H630.5 V244.0 H640.5 V243.0 H650.5 V243.0 H660.5 V253.5 H670.5 V261.5 H680.5 V275.0 H690.5 V302.5 H700.5 V318.5 H710.5 V343.0 H720.5 V359.5 H730.5 V375.5 H740.5 V386.5 H750.5 V398.5 H760.5 V413.5 H770.5 V421.5 H780.5 V427.0 H790.5 V435.0 H800.5 V440.5 H810.5 V446.0 H820.5 V450.5 H830.5 V456.0 H840.5 V461.5 H850.5 V465.0 H860.5 V470.5 H870.5 V474.5 H880.5 V478.5 H890.5 V482.5 H900.5 V485.0 H910.5 V487.5 H920.5 V491.5 H930.5 V495.5 H940.5 V498.5 H950.5 V502.5 H960.5 V505.5 H970.5 V509.5 H980.5 V512.5 H990.5 V515.5 H1000.5 V518.5 H1010.5 V521.5 H1020.5 V524.5 H1030.5 V527.5 H1040.5 V530.5 H1050.5 V533.5 H1060.5 V535.5 H1070.5 V538.5 H1080.5 V540.5 H1090.5 V542.5 H1100.5 V545.5 H1110.5 V547.5 H1120.5 V549.5 H1130.5 V551.5 H1140.5 V552.5 H1150.5 V554.5 H1160.5 V556.5 H1170.5 V557.5 H1180.5 V559.5 H1190.5 V560.5 H1200.5 V561.5 H1210.5 V563.5 H1220.5 V564.5 H1230.5 V565.5 H1240.5 V566.5 H1250.5 V566.5 H1260.5 V567.5 H1270.5 V568.5 H1280.5 V568.5 H1290.5 V569.5 H1300.5 V569.5 H1310.5 V569.5 H1320.5 V569.5 H1330.5 V569.5 H1340.5 V570.5 H1350.5 V570.5 H1360.5 V570.5 H1370.5 V570.5 H1380.5 V570.5 H1390.5 V570.5 H1400.5 V570.5 H1410.5 V570.5 H1420.5 V570.5 H1430.5 V570.5 H1440.5 V570.5 H1450.5 V562.5 H1460.5 V555.5 H1470.5 V548.5 H1480.5 V535.5 H1486" stroke="#dcdcdc" stroke-width="1" fill="none" shape-rendering="crispEdges"/><path d="M1487.5 535.5 H1490.5 V528.5 H1500.5 V521.5 H1510.5 V512.5 H1520.5 V503.5 H1530.5" stroke="#dcdcdc" stroke-width="1.3" fill="none" shape-rendering="crispEdges"/><path d="M591.5 0 V812" stroke="#d9541e" stroke-width="1" stroke-dasharray="1 1" shape-rendering="crispEdges"/></svg>
<div style="left:67px;top:410px;width:1px;height:812px;background:#e8541a;"></div>
<div style="left:67px;top:409.7px;width:49px;height:6.3px;background:#f06a30;"></div>
<div style="left:67px;top:409.7px;width:7px;height:48.5px;background:#f06a30;"></div>
<div style="left:74px;top:416px;width:17px;height:18px;background:#e54a0a;"></div>
<span class="t" style="left:73.21px;top:410.97px;color:#ffffff;font-size:18px;letter-spacing:-0.426px;">S</span>
<div style="left:67px;top:1173.5px;width:7px;height:48.5px;background:#f06a30;"></div>
<div style="left:67px;top:1215.5px;width:49px;height:6.5px;background:#f06a30;"></div>
<div style="left:50px;top:1268px;width:1560px;height:35.5px;background:#151515;border-radius:6px;"></div>
<div style="left:53px;top:1273px;width:1560px;height:26px;background:#3a3a3a;border-radius:3px;"></div>
<div style="left:53px;top:1273px;width:130.5px;height:26px;background:#2b2b2b;border-radius:3px;border:1px solid #222;"></div>
<div style="left:50.5px;top:1313px;width:31px;height:30.5px;background:#d4622f;border-radius:4px;border:1px solid #b2501f;"></div>
<svg style="left:55px;top:1318px;" width="22" height="20" viewBox="0 0 22 20"><path d="M3 10.5 L8.5 16 L19 4.5" stroke="#151515" stroke-width="3" fill="none"/></svg>
<span class="t" style="left:88.06px;top:1316.88px;color:#9a9a9a;font-size:20px;letter-spacing:0.188px;">Undo</span>
<div style="left:161.9px;top:1311.8px;width:40.499999999999986px;height:32.4px;background:#3b3b3b;border:1px solid #191919;"></div>
<svg style="left:171px;top:1315px;" width="24" height="27" viewBox="0 0 24 27"><path d="M6.3 1 L9 0.6 L16.6 19 L14 20 Z M17.7 1 L15 0.6 L7.4 19 L10 20 Z" fill="#f4f4f4"/><circle cx="6.2" cy="22" r="3.4" stroke="#f4f4f4" stroke-width="2.2" fill="none"/><circle cx="17.8" cy="22" r="3.4" stroke="#f4f4f4" stroke-width="2.2" fill="none"/></svg>
<div style="left:206.0px;top:1311.8px;width:40.39999999999999px;height:32.4px;background:#3b3b3b;border:1px solid #191919;"></div>
<svg style="left:211px;top:1314px;" width="30" height="28" viewBox="0 0 30 28"><path d="M2.0 13 V15" stroke="#777" stroke-width="1"/><path d="M4.4 11 V17" stroke="#777" stroke-width="1"/><path d="M6.8 12.5 V15.5" stroke="#777" stroke-width="1"/><path d="M9.2 10 V18" stroke="#777" stroke-width="1"/><path d="M11.6 12 V16" stroke="#777" stroke-width="1"/><path d="M14.0 9 V19" stroke="#777" stroke-width="1"/><path d="M16.4 12 V16" stroke="#777" stroke-width="1"/><path d="M18.8 10.5 V17.5" stroke="#777" stroke-width="1"/><path d="M21.2 12.5 V15.5" stroke="#777" stroke-width="1"/><path d="M23.6 11 V17" stroke="#777" stroke-width="1"/><path d="M26.0 13 V15" stroke="#777" stroke-width="1"/><path d="M7 1 V21.5 H28 M2 6.5 H22.5 V27" stroke="#7a7a7a" stroke-width="2" fill="none"/></svg>
<div style="left:263.90000000000003px;top:1311.8px;width:48.199999999999974px;height:32.4px;background:#3b3b3b;border:1px solid #191919;"></div>
<span class="t" style="left:271.56px;top:1317.32px;color:#dcdcdc;font-size:17px;font-weight:bold;letter-spacing:-0.6px;transform:scaleX(0.8);transform-origin:0 0;">dB</span>
<svg style="left:294px;top:1322.5px;" width="11" height="13" viewBox="0 0 11 13"><path d="M0 5.5 L5.4 0 L10.8 5.5 Z M0 7.2 L5.4 12.7 L10.8 7.2 Z" fill="#f0f0f0"/></svg>
<div style="left:316.1px;top:1311.8px;width:48.10000000000001px;height:32.4px;background:#3b3b3b;border:1px solid #191919;"></div>
<svg style="left:325px;top:1315px;" width="30" height="26" viewBox="0 0 30 26"><path d="M7 1 L2 7 H12 Z M7 25 L2 19 H12 Z" fill="#f0f0f0"/><path d="M7 6 V9.5 M7 16.5 V20" stroke="#f0f0f0" stroke-width="2"/><path d="M23 1 L18 7 H28 Z M23 25 L18 19 H28 Z" fill="#f0f0f0"/><path d="M23 6 V9.5 M23 16.5 V20" stroke="#f0f0f0" stroke-width="2"/><path d="M3.5 11 V15" stroke="#d0d0d0" stroke-width="1"/><path d="M5.8 9.5 V16.5" stroke="#d0d0d0" stroke-width="1"/><path d="M8.1 10.5 V15.5" stroke="#d0d0d0" stroke-width="1"/><path d="M10.4 8.5 V17.5" stroke="#d0d0d0" stroke-width="1"/><path d="M12.7 10 V16" stroke="#d0d0d0" stroke-width="1"/><path d="M15.0 8 V18" stroke="#d0d0d0" stroke-width="1"/><path d="M17.3 10 V16" stroke="#d0d0d0" stroke-width="1"/><path d="M19.6 8.5 V17.5" stroke="#d0d0d0" stroke-width="1"/><path d="M21.9 10.5 V15.5" stroke="#d0d0d0" stroke-width="1"/><path d="M24.2 9.5 V16.5" stroke="#d0d0d0" stroke-width="1"/><path d="M26.5 11 V15" stroke="#d0d0d0" stroke-width="1"/></svg>
<div style="left:368.0px;top:1311.8px;width:48.40000000000002px;height:32.4px;background:#3b3b3b;border:1px solid #191919;"></div>
<div style="left:380.3px;top:1327.7px;width:23.8px;height:2.4px;background:#f4f4f4;"></div>
<div style="left:419.6px;top:1311.8px;width:47.8px;height:32.4px;background:#3b3b3b;border:1px solid #191919;"></div>
<div style="left:471.6px;top:1311.8px;width:47.8px;height:32.4px;background:#3b3b3b;border:1px solid #191919;"></div>
<div style="left:523.6px;top:1311.8px;width:47.8px;height:32.4px;background:#3b3b3b;border:1px solid #191919;"></div>
<div style="left:575.6px;top:1311.8px;width:47.8px;height:32.4px;background:#3b3b3b;border:1px solid #191919;"></div>
<div style="left:627.6px;top:1311.8px;width:47.8px;height:32.4px;background:#3b3b3b;border:1px solid #191919;"></div>
<div style="left:692.6px;top:1311.8px;width:47.8px;height:32.4px;background:#3b3b3b;border:1px solid #191919;"></div>
<div style="left:744.6px;top:1311.8px;width:47.8px;height:32.4px;background:#3b3b3b;border:1px solid #191919;"></div>
<div style="left:796.6px;top:1311.8px;width:47.8px;height:32.4px;background:#3b3b3b;border:1px solid #191919;"></div>
<div style="left:861.6px;top:1311.8px;width:47.8px;height:32.4px;background:#3b3b3b;border:1px solid #191919;"></div>
<div style="left:913.6px;top:1311.8px;width:47.8px;height:32.4px;background:#3b3b3b;border:1px solid #191919;"></div>
<div style="left:48px;top:1396px;width:12px;height:68px;background:#0f0f0f;border-radius:4px;"></div>
<div style="left:46.9px;top:1448.5px;width:14.3px;height:14.6px;background:#3dcb85;border-radius:3px;"></div>
<div style="left:88px;top:1396px;width:12px;height:132px;background:#0f0f0f;border-radius:4px;"></div>
<div style="left:86.8px;top:1454.6px;width:14.3px;height:14.6px;background:#3dcb85;border-radius:3px;"></div>
<div style="left:38px;top:1470.3px;width:31.5px;height:31.5px;background:linear-gradient(#404040,#3a3a3a);border-radius:4px;border:1px solid #1c1c1c;"></div>
<svg style="left:43px;top:1480px;" width="22" height="12" viewBox="0 0 22 12"><path d="M1 5.3 H9.5 M12.5 5.3 H21" stroke="#b4b4b4" stroke-width="2.2"/><path d="M6.4 11 L9.8 0.5 M12.2 11 L15.6 0.5" stroke="#b4b4b4" stroke-width="2.5"/></svg>
<svg style="left:42px;top:1508px;" width="24" height="24" viewBox="0 0 24 24"><circle cx="12" cy="12" r="11" fill="#222"/></svg>
<div style="left:38px;top:1536.3px;width:31.5px;height:31.5px;background:linear-gradient(#404040,#3a3a3a);border-radius:4px;border:1px solid #1c1c1c;"></div>
<svg style="left:43px;top:1546px;" width="22" height="12" viewBox="0 0 22 12"><path d="M1 5.3 H9.5 M12.5 5.3 H21" stroke="#b4b4b4" stroke-width="2.2"/><path d="M6.4 11 L9.8 0.5 M12.2 11 L15.6 0.5" stroke="#b4b4b4" stroke-width="2.5"/></svg>
<div style="left:78px;top:1536.3px;width:31.5px;height:31.5px;background:linear-gradient(#404040,#3a3a3a);border-radius:4px;border:1px solid #1c1c1c;"></div>
<svg style="left:82.7px;top:1545px;" width="22" height="14" viewBox="0 0 22 14"><path d="M3 7 H19" stroke="#f0f0f0" stroke-width="2.2"/><circle cx="11" cy="7" r="4.1" fill="#3b3b3b" stroke="#f0f0f0" stroke-width="2.4"/></svg>
<div style="left:122px;top:1388px;width:31.8px;height:180px;background:linear-gradient(#2f2f2f,#272727);border-radius:4px 0 0 4px;border:1px solid #1d1d1d;"></div>
<svg style="left:133.3px;top:1470.5px;" width="9.5" height="13" viewBox="0 0 9.5 13"><path d="M9.5 0 L0 6.5 L9.5 13 Z" fill="#8a8a8a"/></svg>
<div style="left:157.5px;top:1388px;width:1500px;height:179.49999999999994px;background:#161616;"></div>
<svg style="left:158.5px;top:1388px;" width="1440" height="179" viewBox="0 0 1440 179"><defs><linearGradient id="wk" x1="0" y1="0" x2="0" y2="1"><stop offset="0" stop-color="#f9f9f9"/><stop offset="0.93" stop-color="#f7f7f7"/><stop offset="1" stop-color="#e4e4e4"/></linearGradient></defs><rect x="0.60" y="0" width="26.56" height="178.3" rx="2.5" fill="url(#wk)"/><rect x="0.60" y="0" width="26.56" height="8" fill="#f7f7f7"/><rect x="0.60" y="0" width="2.2" height="175.3" fill="#d9d9d9" opacity="0.7"/><rect x="25.26" y="0" width="1.8" height="175.3" fill="#cfcfcf" opacity="0.8"/><rect x="28.26" y="0" width="26.66" height="178.3" rx="2.5" fill="url(#wk)"/><rect x="28.26" y="0" width="26.66" height="8" fill="#f7f7f7"/><rect x="28.26" y="0" width="2.2" height="175.3" fill="#d9d9d9" opacity="0.7"/><rect x="53.03" y="0" width="1.8" height="175.3" fill="#cfcfcf" opacity="0.8"/><rect x="56.03" y="0" width="24.79" height="178.3" rx="2.5" fill="url(#wk)"/><rect x="56.03" y="0" width="24.79" height="8" fill="#f7f7f7"/><rect x="56.03" y="0" width="2.2" height="175.3" fill="#d9d9d9" opacity="0.7"/><rect x="78.92" y="0" width="1.8" height="175.3" fill="#cfcfcf" opacity="0.8"/><rect x="81.92" y="0" width="28.53" height="178.3" rx="2.5" fill="url(#wk)"/><rect x="81.92" y="0" width="28.53" height="8" fill="#f7f7f7"/><rect x="81.92" y="0" width="2.2" height="175.3" fill="#d9d9d9" opacity="0.7"/><rect x="108.55" y="0" width="1.8" height="175.3" fill="#cfcfcf" opacity="0.8"/><rect x="111.55" y="0" width="26.96" height="178.3" rx="2.5" fill="url(#wk)"/><rect x="111.55" y="0" width="26.96" height="8" fill="#f7f7f7"/><rect x="111.55" y="0" width="2.2" height="175.3" fill="#d9d9d9" opacity="0.7"/><rect x="136.61" y="0" width="1.8" height="175.3" fill="#cfcfcf" opacity="0.8"/><rect x="139.61" y="0" width="28.43" height="178.3" rx="2.5" fill="url(#wk)"/><rect x="139.61" y="0" width="28.43" height="8" fill="#f7f7f7"/><rect x="139.61" y="0" width="2.2" height="175.3" fill="#d9d9d9" opacity="0.7"/><rect x="166.15" y="0" width="1.8" height="175.3" fill="#cfcfcf" opacity="0.8"/><rect x="169.15" y="0" width="27.25" height="178.3" rx="2.5" fill="url(#wk)"/><rect x="169.15" y="0" width="27.25" height="8" fill="#f7f7f7"/><rect x="169.15" y="0" width="2.2" height="175.3" fill="#d9d9d9" opacity="0.7"/><rect x="194.50" y="0" width="1.8" height="175.3" fill="#cfcfcf" opacity="0.8"/><rect x="197.50" y="0" width="26.72" height="178.3" rx="2.5" fill="url(#wk)"/><rect x="197.50" y="0" width="26.72" height="8" fill="#f7f7f7"/><rect x="197.50" y="0" width="2.2" height="175.3" fill="#d9d9d9" opacity="0.7"/><rect x="222.32" y="0" width="1.8" height="175.3" fill="#cfcfcf" opacity="0.8"/><rect x="225.32" y="0" width="26.82" height="178.3" rx="2.5" fill="url(#wk)"/><rect x="225.32" y="0" width="26.82" height="8" fill="#f7f7f7"/><rect x="225.32" y="0" width="2.2" height="175.3" fill="#d9d9d9" opacity="0.7"/><rect x="250.24" y="0" width="1.8" height="175.3" fill="#cfcfcf" opacity="0.8"/><rect x="253.24" y="0" width="24.94" height="178.3" rx="2.5" fill="url(#wk)"/><rect x="253.24" y="0" width="24.94" height="8" fill="#f7f7f7"/><rect x="253.24" y="0" width="2.2" height="175.3" fill="#d9d9d9" opacity="0.7"/><rect x="276.27" y="0" width="1.8" height="175.3" fill="#cfcfcf" opacity="0.8"/><rect x="279.27" y="0" width="28.70" height="178.3" rx="2.5" fill="url(#wk)"/><rect x="279.27" y="0" width="28.70" height="8" fill="#f7f7f7"/><rect x="279.27" y="0" width="2.2" height="175.3" fill="#d9d9d9" opacity="0.7"/><rect x="306.07" y="0" width="1.8" height="175.3" fill="#cfcfcf" opacity="0.8"/><rect x="309.07" y="0" width="27.12" height="178.3" rx="2.5" fill="url(#wk)"/><rect x="309.07" y="0" width="27.12" height="8" fill="#f7f7f7"/><rect x="309.07" y="0" width="2.2" height="175.3" fill="#d9d9d9" opacity="0.7"/><rect x="334.29" y="0" width="1.8" height="175.3" fill="#cfcfcf" opacity="0.8"/><rect x="337.29" y="0" width="28.60" height="178.3" rx="2.5" fill="url(#wk)"/><rect x="337.29" y="0" width="28.60" height="8" fill="#f7f7f7"/><rect x="337.29" y="0" width="2.2" height="175.3" fill="#d9d9d9" opacity="0.7"/><rect x="363.99" y="0" width="1.8" height="175.3" fill="#cfcfcf" opacity="0.8"/><rect x="366.99" y="0" width="27.41" height="178.3" rx="2.5" fill="url(#wk)"/><rect x="366.99" y="0" width="27.41" height="8" fill="#f7f7f7"/><rect x="366.99" y="0" width="2.2" height="175.3" fill="#d9d9d9" opacity="0.7"/><rect x="392.50" y="0" width="1.8" height="175.3" fill="#cfcfcf" opacity="0.8"/><rect x="395.50" y="0" width="26.92" height="178.3" rx="2.5" fill="url(#wk)"/><rect x="395.50" y="0" width="26.92" height="8" fill="#f7f7f7"/><rect x="395.50" y="0" width="2.2" height="175.3" fill="#d9d9d9" opacity="0.7"/><rect x="420.52" y="0" width="1.8" height="175.3" fill="#cfcfcf" opacity="0.8"/><rect x="423.52" y="0" width="27.02" height="178.3" rx="2.5" fill="url(#wk)"/><rect x="423.52" y="0" width="27.02" height="8" fill="#f7f7f7"/><rect x="423.52" y="0" width="2.2" height="175.3" fill="#d9d9d9" opacity="0.7"/><rect x="448.63" y="0" width="1.8" height="175.3" fill="#cfcfcf" opacity="0.8"/><rect x="451.63" y="0" width="25.12" height="178.3" rx="2.5" fill="url(#wk)"/><rect x="451.63" y="0" width="25.12" height="8" fill="#f7f7f7"/><rect x="451.63" y="0" width="2.2" height="175.3" fill="#d9d9d9" opacity="0.7"/><rect x="474.85" y="0" width="1.8" height="175.3" fill="#cfcfcf" opacity="0.8"/><rect x="477.85" y="0" width="28.91" height="178.3" rx="2.5" fill="url(#wk)"/><rect x="477.85" y="0" width="28.91" height="8" fill="#f7f7f7"/><rect x="477.85" y="0" width="2.2" height="175.3" fill="#d9d9d9" opacity="0.7"/><rect x="504.86" y="0" width="1.8" height="175.3" fill="#cfcfcf" opacity="0.8"/><rect x="507.86" y="0" width="27.31" height="178.3" rx="2.5" fill="url(#wk)"/><rect x="507.86" y="0" width="27.31" height="8" fill="#f7f7f7"/><rect x="507.86" y="0" width="2.2" height="175.3" fill="#d9d9d9" opacity="0.7"/><rect x="533.28" y="0" width="1.8" height="175.3" fill="#cfcfcf" opacity="0.8"/><rect x="536.28" y="0" width="28.81" height="178.3" rx="2.5" fill="url(#wk)"/><rect x="536.28" y="0" width="28.81" height="8" fill="#f7f7f7"/><rect x="536.28" y="0" width="2.2" height="175.3" fill="#d9d9d9" opacity="0.7"/><rect x="563.19" y="0" width="1.8" height="175.3" fill="#cfcfcf" opacity="0.8"/><rect x="566.19" y="0" width="27.61" height="178.3" rx="2.5" fill="url(#wk)"/><rect x="566.19" y="0" width="27.61" height="8" fill="#f7f7f7"/><rect x="566.19" y="0" width="2.2" height="175.3" fill="#d9d9d9" opacity="0.7"/><rect x="591.90" y="0" width="1.8" height="175.3" fill="#cfcfcf" opacity="0.8"/><rect x="594.90" y="0" width="26.83" height="178.3" rx="2.5" fill="url(#wk)"/><rect x="594.90" y="0" width="26.83" height="8" fill="#f7f7f7"/><rect x="594.90" y="0" width="2.2" height="175.3" fill="#d9d9d9" opacity="0.7"/><rect x="619.83" y="0" width="1.8" height="175.3" fill="#cfcfcf" opacity="0.8"/><rect x="622.83" y="0" width="26.93" height="178.3" rx="2.5" fill="url(#wk)"/><rect x="622.83" y="0" width="26.93" height="8" fill="#f7f7f7"/><rect x="622.83" y="0" width="2.2" height="175.3" fill="#d9d9d9" opacity="0.7"/><rect x="647.86" y="0" width="1.8" height="175.3" fill="#cfcfcf" opacity="0.8"/><rect x="650.86" y="0" width="25.04" height="178.3" rx="2.5" fill="url(#wk)"/><rect x="650.86" y="0" width="25.04" height="8" fill="#f7f7f7"/><rect x="650.86" y="0" width="2.2" height="175.3" fill="#d9d9d9" opacity="0.7"/><rect x="674.00" y="0" width="1.8" height="175.3" fill="#cfcfcf" opacity="0.8"/><rect x="677.00" y="0" width="28.82" height="178.3" rx="2.5" fill="url(#wk)"/><rect x="677.00" y="0" width="28.82" height="8" fill="#f7f7f7"/><rect x="677.00" y="0" width="2.2" height="175.3" fill="#d9d9d9" opacity="0.7"/><rect x="703.92" y="0" width="1.8" height="175.3" fill="#cfcfcf" opacity="0.8"/><rect x="706.92" y="0" width="27.23" height="178.3" rx="2.5" fill="url(#wk)"/><rect x="706.92" y="0" width="27.23" height="8" fill="#f7f7f7"/><rect x="706.92" y="0" width="2.2" height="175.3" fill="#d9d9d9" opacity="0.7"/><rect x="732.25" y="0" width="1.8" height="175.3" fill="#cfcfcf" opacity="0.8"/><rect x="735.25" y="0" width="28.72" height="178.3" rx="2.5" fill="url(#wk)"/><rect x="735.25" y="0" width="28.72" height="8" fill="#f7f7f7"/><rect x="735.25" y="0" width="2.2" height="175.3" fill="#d9d9d9" opacity="0.7"/><rect x="762.07" y="0" width="1.8" height="175.3" fill="#cfcfcf" opacity="0.8"/><rect x="765.07" y="0" width="27.53" height="178.3" rx="2.5" fill="url(#wk)"/><rect x="765.07" y="0" width="27.53" height="8" fill="#f7f7f7"/><rect x="765.07" y="0" width="2.2" height="175.3" fill="#d9d9d9" opacity="0.7"/><rect x="790.70" y="0" width="1.8" height="175.3" fill="#cfcfcf" opacity="0.8"/><rect x="793.70" y="0" width="26.78" height="178.3" rx="2.5" fill="url(#wk)"/><rect x="793.70" y="0" width="26.78" height="8" fill="#f7f7f7"/><rect x="793.70" y="0" width="2.2" height="175.3" fill="#d9d9d9" opacity="0.7"/><rect x="818.58" y="0" width="1.8" height="175.3" fill="#cfcfcf" opacity="0.8"/><rect x="821.58" y="0" width="26.87" height="178.3" rx="2.5" fill="url(#wk)"/><rect x="821.58" y="0" width="26.87" height="8" fill="#f7f7f7"/><rect x="821.58" y="0" width="2.2" height="175.3" fill="#d9d9d9" opacity="0.7"/><rect x="846.55" y="0" width="1.8" height="175.3" fill="#cfcfcf" opacity="0.8"/><rect x="849.55" y="0" width="24.99" height="178.3" rx="2.5" fill="url(#wk)"/><rect x="849.55" y="0" width="24.99" height="8" fill="#f7f7f7"/><rect x="849.55" y="0" width="2.2" height="175.3" fill="#d9d9d9" opacity="0.7"/><rect x="872.64" y="0" width="1.8" height="175.3" fill="#cfcfcf" opacity="0.8"/><rect x="875.64" y="0" width="28.76" height="178.3" rx="2.5" fill="url(#wk)"/><rect x="875.64" y="0" width="28.76" height="8" fill="#f7f7f7"/><rect x="875.64" y="0" width="2.2" height="175.3" fill="#d9d9d9" opacity="0.7"/><rect x="902.50" y="0" width="1.8" height="175.3" fill="#cfcfcf" opacity="0.8"/><rect x="905.50" y="0" width="27.17" height="178.3" rx="2.5" fill="url(#wk)"/><rect x="905.50" y="0" width="27.17" height="8" fill="#f7f7f7"/><rect x="905.50" y="0" width="2.2" height="175.3" fill="#d9d9d9" opacity="0.7"/><rect x="930.77" y="0" width="1.8" height="175.3" fill="#cfcfcf" opacity="0.8"/><rect x="933.77" y="0" width="28.66" height="178.3" rx="2.5" fill="url(#wk)"/><rect x="933.77" y="0" width="28.66" height="8" fill="#f7f7f7"/><rect x="933.77" y="0" width="2.2" height="175.3" fill="#d9d9d9" opacity="0.7"/><rect x="960.53" y="0" width="1.8" height="175.3" fill="#cfcfcf" opacity="0.8"/><rect x="963.53" y="0" width="27.47" height="178.3" rx="2.5" fill="url(#wk)"/><rect x="963.53" y="0" width="27.47" height="8" fill="#f7f7f7"/><rect x="963.53" y="0" width="2.2" height="175.3" fill="#d9d9d9" opacity="0.7"/><rect x="989.10" y="0" width="1.8" height="175.3" fill="#cfcfcf" opacity="0.8"/><rect x="992.10" y="0" width="26.75" height="178.3" rx="2.5" fill="url(#wk)"/><rect x="992.10" y="0" width="26.75" height="8" fill="#f7f7f7"/><rect x="992.10" y="0" width="2.2" height="175.3" fill="#d9d9d9" opacity="0.7"/><rect x="1016.95" y="0" width="1.8" height="175.3" fill="#cfcfcf" opacity="0.8"/><rect x="1019.95" y="0" width="26.85" height="178.3" rx="2.5" fill="url(#wk)"/><rect x="1019.95" y="0" width="26.85" height="8" fill="#f7f7f7"/><rect x="1019.95" y="0" width="2.2" height="175.3" fill="#d9d9d9" opacity="0.7"/><rect x="1044.89" y="0" width="1.8" height="175.3" fill="#cfcfcf" opacity="0.8"/><rect x="1047.89" y="0" width="24.96" height="178.3" rx="2.5" fill="url(#wk)"/><rect x="1047.89" y="0" width="24.96" height="8" fill="#f7f7f7"/><rect x="1047.89" y="0" width="2.2" height="175.3" fill="#d9d9d9" opacity="0.7"/><rect x="1070.96" y="0" width="1.8" height="175.3" fill="#cfcfcf" opacity="0.8"/><rect x="1073.96" y="0" width="28.73" height="178.3" rx="2.5" fill="url(#wk)"/><rect x="1073.96" y="0" width="28.73" height="8" fill="#f7f7f7"/><rect x="1073.96" y="0" width="2.2" height="175.3" fill="#d9d9d9" opacity="0.7"/><rect x="1100.79" y="0" width="1.8" height="175.3" fill="#cfcfcf" opacity="0.8"/><rect x="1103.79" y="0" width="27.14" height="178.3" rx="2.5" fill="url(#wk)"/><rect x="1103.79" y="0" width="27.14" height="8" fill="#f7f7f7"/><rect x="1103.79" y="0" width="2.2" height="175.3" fill="#d9d9d9" opacity="0.7"/><rect x="1129.03" y="0" width="1.8" height="175.3" fill="#cfcfcf" opacity="0.8"/><rect x="1132.03" y="0" width="28.63" height="178.3" rx="2.5" fill="url(#wk)"/><rect x="1132.03" y="0" width="28.63" height="8" fill="#f7f7f7"/><rect x="1132.03" y="0" width="2.2" height="175.3" fill="#d9d9d9" opacity="0.7"/><rect x="1158.76" y="0" width="1.8" height="175.3" fill="#cfcfcf" opacity="0.8"/><rect x="1161.76" y="0" width="27.44" height="178.3" rx="2.5" fill="url(#wk)"/><rect x="1161.76" y="0" width="27.44" height="8" fill="#f7f7f7"/><rect x="1161.76" y="0" width="2.2" height="175.3" fill="#d9d9d9" opacity="0.7"/><rect x="1187.30" y="0" width="1.8" height="175.3" fill="#cfcfcf" opacity="0.8"/><rect x="1190.30" y="0" width="26.73" height="178.3" rx="2.5" fill="url(#wk)"/><rect x="1190.30" y="0" width="26.73" height="8" fill="#f7f7f7"/><rect x="1190.30" y="0" width="2.2" height="175.3" fill="#d9d9d9" opacity="0.7"/><rect x="1215.13" y="0" width="1.8" height="175.3" fill="#cfcfcf" opacity="0.8"/><rect x="1218.13" y="0" width="26.83" height="178.3" rx="2.5" fill="url(#wk)"/><rect x="1218.13" y="0" width="26.83" height="8" fill="#f7f7f7"/><rect x="1218.13" y="0" width="2.2" height="175.3" fill="#d9d9d9" opacity="0.7"/><rect x="1243.07" y="0" width="1.8" height="175.3" fill="#cfcfcf" opacity="0.8"/><rect x="1246.07" y="0" width="24.95" height="178.3" rx="2.5" fill="url(#wk)"/><rect x="1246.07" y="0" width="24.95" height="8" fill="#f7f7f7"/><rect x="1246.07" y="0" width="2.2" height="175.3" fill="#d9d9d9" opacity="0.7"/><rect x="1269.12" y="0" width="1.8" height="175.3" fill="#cfcfcf" opacity="0.8"/><rect x="1272.12" y="0" width="28.71" height="178.3" rx="2.5" fill="url(#wk)"/><rect x="1272.12" y="0" width="28.71" height="8" fill="#f7f7f7"/><rect x="1272.12" y="0" width="2.2" height="175.3" fill="#d9d9d9" opacity="0.7"/><rect x="1298.93" y="0" width="1.8" height="175.3" fill="#cfcfcf" opacity="0.8"/><rect x="1301.93" y="0" width="27.13" height="178.3" rx="2.5" fill="url(#wk)"/><rect x="1301.93" y="0" width="27.13" height="8" fill="#f7f7f7"/><rect x="1301.93" y="0" width="2.2" height="175.3" fill="#d9d9d9" opacity="0.7"/><rect x="1327.16" y="0" width="1.8" height="175.3" fill="#cfcfcf" opacity="0.8"/><rect x="1330.16" y="0" width="28.61" height="178.3" rx="2.5" fill="url(#wk)"/><rect x="1330.16" y="0" width="28.61" height="8" fill="#f7f7f7"/><rect x="1330.16" y="0" width="2.2" height="175.3" fill="#d9d9d9" opacity="0.7"/><rect x="1356.87" y="0" width="1.8" height="175.3" fill="#cfcfcf" opacity="0.8"/><rect x="1359.87" y="0" width="27.43" height="178.3" rx="2.5" fill="url(#wk)"/><rect x="1359.87" y="0" width="27.43" height="8" fill="#f7f7f7"/><rect x="1359.87" y="0" width="2.2" height="175.3" fill="#d9d9d9" opacity="0.7"/><rect x="1385.40" y="0" width="1.8" height="175.3" fill="#cfcfcf" opacity="0.8"/><rect x="1388.40" y="0" width="26.75" height="178.3" rx="2.5" fill="url(#wk)"/><rect x="1388.40" y="0" width="26.75" height="8" fill="#f7f7f7"/><rect x="1388.40" y="0" width="2.2" height="175.3" fill="#d9d9d9" opacity="0.7"/><rect x="1413.25" y="0" width="1.8" height="175.3" fill="#cfcfcf" opacity="0.8"/><rect x="1416.25" y="0" width="26.85" height="178.3" rx="2.5" fill="url(#wk)"/><rect x="1416.25" y="0" width="26.85" height="8" fill="#f7f7f7"/><rect x="1416.25" y="0" width="2.2" height="175.3" fill="#d9d9d9" opacity="0.7"/><rect x="1441.19" y="0" width="1.8" height="175.3" fill="#cfcfcf" opacity="0.8"/><rect x="1444.19" y="0" width="24.96" height="178.3" rx="2.5" fill="url(#wk)"/><rect x="1444.19" y="0" width="24.96" height="8" fill="#f7f7f7"/><rect x="1444.19" y="0" width="2.2" height="175.3" fill="#d9d9d9" opacity="0.7"/><rect x="1467.26" y="0" width="1.8" height="175.3" fill="#cfcfcf" opacity="0.8"/><rect x="1470.26" y="0" width="28.73" height="178.3" rx="2.5" fill="url(#wk)"/><rect x="1470.26" y="0" width="28.73" height="8" fill="#f7f7f7"/><rect x="1470.26" y="0" width="2.2" height="175.3" fill="#d9d9d9" opacity="0.7"/><rect x="1497.09" y="0" width="1.8" height="175.3" fill="#cfcfcf" opacity="0.8"/><rect x="1500.09" y="0" width="27.14" height="178.3" rx="2.5" fill="url(#wk)"/><rect x="1500.09" y="0" width="27.14" height="8" fill="#f7f7f7"/><rect x="1500.09" y="0" width="2.2" height="175.3" fill="#d9d9d9" opacity="0.7"/><rect x="1525.33" y="0" width="1.8" height="175.3" fill="#cfcfcf" opacity="0.8"/><rect x="1528.33" y="0" width="28.63" height="178.3" rx="2.5" fill="url(#wk)"/><rect x="1528.33" y="0" width="28.63" height="8" fill="#f7f7f7"/><rect x="1528.33" y="0" width="2.2" height="175.3" fill="#d9d9d9" opacity="0.7"/><rect x="1555.06" y="0" width="1.8" height="175.3" fill="#cfcfcf" opacity="0.8"/><rect x="1558.06" y="0" width="27.44" height="178.3" rx="2.5" fill="url(#wk)"/><rect x="1558.06" y="0" width="27.44" height="8" fill="#f7f7f7"/><rect x="1558.06" y="0" width="2.2" height="175.3" fill="#d9d9d9" opacity="0.7"/><rect x="1583.60" y="0" width="1.8" height="175.3" fill="#cfcfcf" opacity="0.8"/><rect x="14.86" y="0" width="17.5" height="120.2" fill="#bdbdbd" opacity="0.55"/><rect x="15.66" y="0" width="15.9" height="119.5" fill="#2f2f2f"/><rect x="15.66" y="0" width="1.6" height="119.5" fill="#262626"/><rect x="29.96" y="0" width="1.6" height="119.5" fill="#262626"/><rect x="15.66" y="105.8" width="15.9" height="13.7" fill="#232323"/><rect x="15.66" y="117.5" width="15.9" height="2" fill="#181818"/><rect x="48.87" y="0" width="17.5" height="120.2" fill="#bdbdbd" opacity="0.55"/><rect x="49.67" y="0" width="15.9" height="119.5" fill="#2f2f2f"/><rect x="49.67" y="0" width="1.6" height="119.5" fill="#262626"/><rect x="63.97" y="0" width="1.6" height="119.5" fill="#262626"/><rect x="49.67" y="105.8" width="15.9" height="13.7" fill="#232323"/><rect x="49.67" y="117.5" width="15.9" height="2" fill="#181818"/><rect x="98.55" y="0" width="17.5" height="120.2" fill="#bdbdbd" opacity="0.55"/><rect x="99.35" y="0" width="15.9" height="119.5" fill="#2f2f2f"/><rect x="99.35" y="0" width="1.6" height="119.5" fill="#262626"/><rect x="113.65" y="0" width="1.6" height="119.5" fill="#262626"/><rect x="99.35" y="105.8" width="15.9" height="13.7" fill="#232323"/><rect x="99.35" y="117.5" width="15.9" height="2" fill="#181818"/><rect x="130.57" y="0" width="17.5" height="120.2" fill="#bdbdbd" opacity="0.55"/><rect x="131.37" y="0" width="15.9" height="119.5" fill="#2f2f2f"/><rect x="131.37" y="0" width="1.6" height="119.5" fill="#262626"/><rect x="145.67" y="0" width="1.6" height="119.5" fill="#262626"/><rect x="131.37" y="105.8" width="15.9" height="13.7" fill="#232323"/><rect x="131.37" y="117.5" width="15.9" height="2" fill="#181818"/><rect x="164.38" y="0" width="17.5" height="120.2" fill="#bdbdbd" opacity="0.55"/><rect x="165.18" y="0" width="15.9" height="119.5" fill="#2f2f2f"/><rect x="165.18" y="0" width="1.6" height="119.5" fill="#262626"/><rect x="179.48" y="0" width="1.6" height="119.5" fill="#262626"/><rect x="165.18" y="105.8" width="15.9" height="13.7" fill="#232323"/><rect x="165.18" y="117.5" width="15.9" height="2" fill="#181818"/><rect x="211.85" y="0" width="17.5" height="120.2" fill="#bdbdbd" opacity="0.55"/><rect x="212.65" y="0" width="15.9" height="119.5" fill="#2f2f2f"/><rect x="212.65" y="0" width="1.6" height="119.5" fill="#262626"/><rect x="226.95" y="0" width="1.6" height="119.5" fill="#262626"/><rect x="212.65" y="105.8" width="15.9" height="13.7" fill="#232323"/><rect x="212.65" y="117.5" width="15.9" height="2" fill="#181818"/><rect x="246.05" y="0" width="17.5" height="120.2" fill="#bdbdbd" opacity="0.55"/><rect x="246.85" y="0" width="15.9" height="119.5" fill="#2f2f2f"/><rect x="246.85" y="0" width="1.6" height="119.5" fill="#262626"/><rect x="261.15" y="0" width="1.6" height="119.5" fill="#262626"/><rect x="246.85" y="105.8" width="15.9" height="13.7" fill="#232323"/><rect x="246.85" y="117.5" width="15.9" height="2" fill="#181818"/><rect x="296.00" y="0" width="17.5" height="120.2" fill="#bdbdbd" opacity="0.55"/><rect x="296.80" y="0" width="15.9" height="119.5" fill="#2f2f2f"/><rect x="296.80" y="0" width="1.6" height="119.5" fill="#262626"/><rect x="311.10" y="0" width="1.6" height="119.5" fill="#262626"/><rect x="296.80" y="105.8" width="15.9" height="13.7" fill="#232323"/><rect x="296.80" y="117.5" width="15.9" height="2" fill="#181818"/><rect x="328.20" y="0" width="17.5" height="120.2" fill="#bdbdbd" opacity="0.55"/><rect x="329.00" y="0" width="15.9" height="119.5" fill="#2f2f2f"/><rect x="329.00" y="0" width="1.6" height="119.5" fill="#262626"/><rect x="343.30" y="0" width="1.6" height="119.5" fill="#262626"/><rect x="329.00" y="105.8" width="15.9" height="13.7" fill="#232323"/><rect x="329.00" y="117.5" width="15.9" height="2" fill="#181818"/><rect x="362.20" y="0" width="17.5" height="120.2" fill="#bdbdbd" opacity="0.55"/><rect x="363.00" y="0" width="15.9" height="119.5" fill="#2f2f2f"/><rect x="363.00" y="0" width="1.6" height="119.5" fill="#262626"/><rect x="377.30" y="0" width="1.6" height="119.5" fill="#262626"/><rect x="363.00" y="105.8" width="15.9" height="13.7" fill="#232323"/><rect x="363.00" y="117.5" width="15.9" height="2" fill="#181818"/><rect x="409.96" y="0" width="17.5" height="120.2" fill="#bdbdbd" opacity="0.55"/><rect x="410.76" y="0" width="15.9" height="119.5" fill="#2f2f2f"/><rect x="410.76" y="0" width="1.6" height="119.5" fill="#262626"/><rect x="425.06" y="0" width="1.6" height="119.5" fill="#262626"/><rect x="410.76" y="105.8" width="15.9" height="13.7" fill="#232323"/><rect x="410.76" y="117.5" width="15.9" height="2" fill="#181818"/><rect x="444.40" y="0" width="17.5" height="120.2" fill="#bdbdbd" opacity="0.55"/><rect x="445.20" y="0" width="15.9" height="119.5" fill="#2f2f2f"/><rect x="445.20" y="0" width="1.6" height="119.5" fill="#262626"/><rect x="459.50" y="0" width="1.6" height="119.5" fill="#262626"/><rect x="445.20" y="105.8" width="15.9" height="13.7" fill="#232323"/><rect x="445.20" y="117.5" width="15.9" height="2" fill="#181818"/><rect x="494.71" y="0" width="17.5" height="120.2" fill="#bdbdbd" opacity="0.55"/><rect x="495.51" y="0" width="15.9" height="119.5" fill="#2f2f2f"/><rect x="495.51" y="0" width="1.6" height="119.5" fill="#262626"/><rect x="509.81" y="0" width="1.6" height="119.5" fill="#262626"/><rect x="495.51" y="105.8" width="15.9" height="13.7" fill="#232323"/><rect x="495.51" y="117.5" width="15.9" height="2" fill="#181818"/><rect x="527.13" y="0" width="17.5" height="120.2" fill="#bdbdbd" opacity="0.55"/><rect x="527.93" y="0" width="15.9" height="119.5" fill="#2f2f2f"/><rect x="527.93" y="0" width="1.6" height="119.5" fill="#262626"/><rect x="542.23" y="0" width="1.6" height="119.5" fill="#262626"/><rect x="527.93" y="105.8" width="15.9" height="13.7" fill="#232323"/><rect x="527.93" y="117.5" width="15.9" height="2" fill="#181818"/><rect x="561.38" y="0" width="17.5" height="120.2" fill="#bdbdbd" opacity="0.55"/><rect x="562.18" y="0" width="15.9" height="119.5" fill="#2f2f2f"/><rect x="562.18" y="0" width="1.6" height="119.5" fill="#262626"/><rect x="576.48" y="0" width="1.6" height="119.5" fill="#262626"/><rect x="562.18" y="105.8" width="15.9" height="13.7" fill="#232323"/><rect x="562.18" y="117.5" width="15.9" height="2" fill="#181818"/><rect x="609.31" y="0" width="17.5" height="120.2" fill="#bdbdbd" opacity="0.55"/><rect x="610.11" y="0" width="15.9" height="119.5" fill="#2f2f2f"/><rect x="610.11" y="0" width="1.6" height="119.5" fill="#262626"/><rect x="624.41" y="0" width="1.6" height="119.5" fill="#262626"/><rect x="610.11" y="105.8" width="15.9" height="13.7" fill="#232323"/><rect x="610.11" y="117.5" width="15.9" height="2" fill="#181818"/><rect x="643.65" y="0" width="17.5" height="120.2" fill="#bdbdbd" opacity="0.55"/><rect x="644.45" y="0" width="15.9" height="119.5" fill="#2f2f2f"/><rect x="644.45" y="0" width="1.6" height="119.5" fill="#262626"/><rect x="658.75" y="0" width="1.6" height="119.5" fill="#262626"/><rect x="644.45" y="105.8" width="15.9" height="13.7" fill="#232323"/><rect x="644.45" y="117.5" width="15.9" height="2" fill="#181818"/><rect x="693.81" y="0" width="17.5" height="120.2" fill="#bdbdbd" opacity="0.55"/><rect x="694.61" y="0" width="15.9" height="119.5" fill="#2f2f2f"/><rect x="694.61" y="0" width="1.6" height="119.5" fill="#262626"/><rect x="708.91" y="0" width="1.6" height="119.5" fill="#262626"/><rect x="694.61" y="105.8" width="15.9" height="13.7" fill="#232323"/><rect x="694.61" y="117.5" width="15.9" height="2" fill="#181818"/><rect x="726.13" y="0" width="17.5" height="120.2" fill="#bdbdbd" opacity="0.55"/><rect x="726.93" y="0" width="15.9" height="119.5" fill="#2f2f2f"/><rect x="726.93" y="0" width="1.6" height="119.5" fill="#262626"/><rect x="741.23" y="0" width="1.6" height="119.5" fill="#262626"/><rect x="726.93" y="105.8" width="15.9" height="13.7" fill="#232323"/><rect x="726.93" y="117.5" width="15.9" height="2" fill="#181818"/><rect x="760.27" y="0" width="17.5" height="120.2" fill="#bdbdbd" opacity="0.55"/><rect x="761.07" y="0" width="15.9" height="119.5" fill="#2f2f2f"/><rect x="761.07" y="0" width="1.6" height="119.5" fill="#262626"/><rect x="775.37" y="0" width="1.6" height="119.5" fill="#262626"/><rect x="761.07" y="105.8" width="15.9" height="13.7" fill="#232323"/><rect x="761.07" y="117.5" width="15.9" height="2" fill="#181818"/><rect x="808.08" y="0" width="17.5" height="120.2" fill="#bdbdbd" opacity="0.55"/><rect x="808.88" y="0" width="15.9" height="119.5" fill="#2f2f2f"/><rect x="808.88" y="0" width="1.6" height="119.5" fill="#262626"/><rect x="823.18" y="0" width="1.6" height="119.5" fill="#262626"/><rect x="808.88" y="105.8" width="15.9" height="13.7" fill="#232323"/><rect x="808.88" y="117.5" width="15.9" height="2" fill="#181818"/><rect x="842.35" y="0" width="17.5" height="120.2" fill="#bdbdbd" opacity="0.55"/><rect x="843.15" y="0" width="15.9" height="119.5" fill="#2f2f2f"/><rect x="843.15" y="0" width="1.6" height="119.5" fill="#262626"/><rect x="857.45" y="0" width="1.6" height="119.5" fill="#262626"/><rect x="843.15" y="105.8" width="15.9" height="13.7" fill="#232323"/><rect x="843.15" y="117.5" width="15.9" height="2" fill="#181818"/><rect x="892.40" y="0" width="17.5" height="120.2" fill="#bdbdbd" opacity="0.55"/><rect x="893.20" y="0" width="15.9" height="119.5" fill="#2f2f2f"/><rect x="893.20" y="0" width="1.6" height="119.5" fill="#262626"/><rect x="907.50" y="0" width="1.6" height="119.5" fill="#262626"/><rect x="893.20" y="105.8" width="15.9" height="13.7" fill="#232323"/><rect x="893.20" y="117.5" width="15.9" height="2" fill="#181818"/><rect x="924.67" y="0" width="17.5" height="120.2" fill="#bdbdbd" opacity="0.55"/><rect x="925.47" y="0" width="15.9" height="119.5" fill="#2f2f2f"/><rect x="925.47" y="0" width="1.6" height="119.5" fill="#262626"/><rect x="939.77" y="0" width="1.6" height="119.5" fill="#262626"/><rect x="925.47" y="105.8" width="15.9" height="13.7" fill="#232323"/><rect x="925.47" y="117.5" width="15.9" height="2" fill="#181818"/><rect x="958.74" y="0" width="17.5" height="120.2" fill="#bdbdbd" opacity="0.55"/><rect x="959.54" y="0" width="15.9" height="119.5" fill="#2f2f2f"/><rect x="959.54" y="0" width="1.6" height="119.5" fill="#262626"/><rect x="973.84" y="0" width="1.6" height="119.5" fill="#262626"/><rect x="959.54" y="105.8" width="15.9" height="13.7" fill="#232323"/><rect x="959.54" y="117.5" width="15.9" height="2" fill="#181818"/><rect x="1006.46" y="0" width="17.5" height="120.2" fill="#bdbdbd" opacity="0.55"/><rect x="1007.26" y="0" width="15.9" height="119.5" fill="#2f2f2f"/><rect x="1007.26" y="0" width="1.6" height="119.5" fill="#262626"/><rect x="1021.56" y="0" width="1.6" height="119.5" fill="#262626"/><rect x="1007.26" y="105.8" width="15.9" height="13.7" fill="#232323"/><rect x="1007.26" y="117.5" width="15.9" height="2" fill="#181818"/><rect x="1040.70" y="0" width="17.5" height="120.2" fill="#bdbdbd" opacity="0.55"/><rect x="1041.50" y="0" width="15.9" height="119.5" fill="#2f2f2f"/><rect x="1041.50" y="0" width="1.6" height="119.5" fill="#262626"/><rect x="1055.80" y="0" width="1.6" height="119.5" fill="#262626"/><rect x="1041.50" y="105.8" width="15.9" height="13.7" fill="#232323"/><rect x="1041.50" y="117.5" width="15.9" height="2" fill="#181818"/><rect x="1090.70" y="0" width="17.5" height="120.2" fill="#bdbdbd" opacity="0.55"/><rect x="1091.50" y="0" width="15.9" height="119.5" fill="#2f2f2f"/><rect x="1091.50" y="0" width="1.6" height="119.5" fill="#262626"/><rect x="1105.80" y="0" width="1.6" height="119.5" fill="#262626"/><rect x="1091.50" y="105.8" width="15.9" height="13.7" fill="#232323"/><rect x="1091.50" y="117.5" width="15.9" height="2" fill="#181818"/><rect x="1122.93" y="0" width="17.5" height="120.2" fill="#bdbdbd" opacity="0.55"/><rect x="1123.73" y="0" width="15.9" height="119.5" fill="#2f2f2f"/><rect x="1123.73" y="0" width="1.6" height="119.5" fill="#262626"/><rect x="1138.03" y="0" width="1.6" height="119.5" fill="#262626"/><rect x="1123.73" y="105.8" width="15.9" height="13.7" fill="#232323"/><rect x="1123.73" y="117.5" width="15.9" height="2" fill="#181818"/><rect x="1156.97" y="0" width="17.5" height="120.2" fill="#bdbdbd" opacity="0.55"/><rect x="1157.77" y="0" width="15.9" height="119.5" fill="#2f2f2f"/><rect x="1157.77" y="0" width="1.6" height="119.5" fill="#262626"/><rect x="1172.07" y="0" width="1.6" height="119.5" fill="#262626"/><rect x="1157.77" y="105.8" width="15.9" height="13.7" fill="#232323"/><rect x="1157.77" y="117.5" width="15.9" height="2" fill="#181818"/><rect x="1204.66" y="0" width="17.5" height="120.2" fill="#bdbdbd" opacity="0.55"/><rect x="1205.46" y="0" width="15.9" height="119.5" fill="#2f2f2f"/><rect x="1205.46" y="0" width="1.6" height="119.5" fill="#262626"/><rect x="1219.76" y="0" width="1.6" height="119.5" fill="#262626"/><rect x="1205.46" y="105.8" width="15.9" height="13.7" fill="#232323"/><rect x="1205.46" y="117.5" width="15.9" height="2" fill="#181818"/><rect x="1238.88" y="0" width="17.5" height="120.2" fill="#bdbdbd" opacity="0.55"/><rect x="1239.68" y="0" width="15.9" height="119.5" fill="#2f2f2f"/><rect x="1239.68" y="0" width="1.6" height="119.5" fill="#262626"/><rect x="1253.98" y="0" width="1.6" height="119.5" fill="#262626"/><rect x="1239.68" y="105.8" width="15.9" height="13.7" fill="#232323"/><rect x="1239.68" y="117.5" width="15.9" height="2" fill="#181818"/><rect x="1288.85" y="0" width="17.5" height="120.2" fill="#bdbdbd" opacity="0.55"/><rect x="1289.65" y="0" width="15.9" height="119.5" fill="#2f2f2f"/><rect x="1289.65" y="0" width="1.6" height="119.5" fill="#262626"/><rect x="1303.95" y="0" width="1.6" height="119.5" fill="#262626"/><rect x="1289.65" y="105.8" width="15.9" height="13.7" fill="#232323"/><rect x="1289.65" y="117.5" width="15.9" height="2" fill="#181818"/><rect x="1321.07" y="0" width="17.5" height="120.2" fill="#bdbdbd" opacity="0.55"/><rect x="1321.87" y="0" width="15.9" height="119.5" fill="#2f2f2f"/><rect x="1321.87" y="0" width="1.6" height="119.5" fill="#262626"/><rect x="1336.17" y="0" width="1.6" height="119.5" fill="#262626"/><rect x="1321.87" y="105.8" width="15.9" height="13.7" fill="#232323"/><rect x="1321.87" y="117.5" width="15.9" height="2" fill="#181818"/><rect x="1355.09" y="0" width="17.5" height="120.2" fill="#bdbdbd" opacity="0.55"/><rect x="1355.89" y="0" width="15.9" height="119.5" fill="#2f2f2f"/><rect x="1355.89" y="0" width="1.6" height="119.5" fill="#262626"/><rect x="1370.19" y="0" width="1.6" height="119.5" fill="#262626"/><rect x="1355.89" y="105.8" width="15.9" height="13.7" fill="#232323"/><rect x="1355.89" y="117.5" width="15.9" height="2" fill="#181818"/><rect x="1402.76" y="0" width="17.5" height="120.2" fill="#bdbdbd" opacity="0.55"/><rect x="1403.56" y="0" width="15.9" height="119.5" fill="#2f2f2f"/><rect x="1403.56" y="0" width="1.6" height="119.5" fill="#262626"/><rect x="1417.86" y="0" width="1.6" height="119.5" fill="#262626"/><rect x="1403.56" y="105.8" width="15.9" height="13.7" fill="#232323"/><rect x="1403.56" y="117.5" width="15.9" height="2" fill="#181818"/><rect x="1437.00" y="0" width="17.5" height="120.2" fill="#bdbdbd" opacity="0.55"/><rect x="1437.80" y="0" width="15.9" height="119.5" fill="#2f2f2f"/><rect x="1437.80" y="0" width="1.6" height="119.5" fill="#262626"/><rect x="1452.10" y="0" width="1.6" height="119.5" fill="#262626"/><rect x="1437.80" y="105.8" width="15.9" height="13.7" fill="#232323"/><rect x="1437.80" y="117.5" width="15.9" height="2" fill="#181818"/><rect x="1487.00" y="0" width="17.5" height="120.2" fill="#bdbdbd" opacity="0.55"/><rect x="1487.80" y="0" width="15.9" height="119.5" fill="#2f2f2f"/><rect x="1487.80" y="0" width="1.6" height="119.5" fill="#262626"/><rect x="1502.10" y="0" width="1.6" height="119.5" fill="#262626"/><rect x="1487.80" y="105.8" width="15.9" height="13.7" fill="#232323"/><rect x="1487.80" y="117.5" width="15.9" height="2" fill="#181818"/><rect x="1519.23" y="0" width="17.5" height="120.2" fill="#bdbdbd" opacity="0.55"/><rect x="1520.03" y="0" width="15.9" height="119.5" fill="#2f2f2f"/><rect x="1520.03" y="0" width="1.6" height="119.5" fill="#262626"/><rect x="1534.33" y="0" width="1.6" height="119.5" fill="#262626"/><rect x="1520.03" y="105.8" width="15.9" height="13.7" fill="#232323"/><rect x="1520.03" y="117.5" width="15.9" height="2" fill="#181818"/><rect x="1553.27" y="0" width="17.5" height="120.2" fill="#bdbdbd" opacity="0.55"/><rect x="1554.07" y="0" width="15.9" height="119.5" fill="#2f2f2f"/><rect x="1554.07" y="0" width="1.6" height="119.5" fill="#262626"/><rect x="1568.37" y="0" width="1.6" height="119.5" fill="#262626"/><rect x="1554.07" y="105.8" width="15.9" height="13.7" fill="#232323"/><rect x="1554.07" y="117.5" width="15.9" height="2" fill="#181818"/></svg>
<span class="t" style="left:164.5px;top:1540.48px;color:#ec2c0c;font-size:20px;letter-spacing:0.275px;">0</span>
<span class="t" style="left:362.79999999999995px;top:1540.48px;color:#ec2c0c;font-size:20px;letter-spacing:0.275px;">1</span>
<span class="t" style="left:559.4px;top:1540.48px;color:#ec2c0c;font-size:20px;letter-spacing:0.275px;">2</span>
<span class="t" style="left:758.8px;top:1540.48px;color:#ec2c0c;font-size:20px;letter-spacing:0.275px;">3</span>
<span class="t" style="left:957.6px;top:1540.48px;color:#ec2c0c;font-size:20px;letter-spacing:0.275px;">4</span>
<span class="t" style="left:1156.0px;top:1540.48px;color:#ec2c0c;font-size:20px;letter-spacing:0.275px;">5</span>
<span class="t" style="left:1354.2px;top:1540.48px;color:#ec2c0c;font-size:20px;letter-spacing:0.275px;">6</span>
<span class="t" style="left:1552.3px;top:1540.48px;color:#ec2c0c;font-size:20px;letter-spacing:0.275px;">7</span>
<div class="menu" style="left:415.5px;top:527.5px;width:556.5px;height:1001px;">
<div style="left:43.10000000000002px;top:4.5px;width:1px;height:988.5px;background:#242424;"></div>
<span class="t" style="left:55.50px;top:14.50px;color:#7c7c7c;letter-spacing:0.373px;">Cut</span>
<span class="t" style="right:19.2px;top:14.50px;color:#7c7c7c;word-spacing:2.5px;">⌘ X</span>
<span class="t" style="left:55.50px;top:50.50px;color:#7c7c7c;letter-spacing:-0.065px;">Copy</span>
<span class="t" style="right:19.2px;top:50.50px;color:#7c7c7c;word-spacing:2.5px;">⌘ C</span>
<span class="t" style="left:55.50px;top:86.50px;color:#7c7c7c;letter-spacing:-0.077px;">Paste</span>
<span class="t" style="right:19.2px;top:86.50px;color:#7c7c7c;word-spacing:2.5px;">⌘ V</span>
<span class="t" style="left:55.50px;top:122.50px;color:#7c7c7c;letter-spacing:-0.253px;">Mix Paste...</span>
<div class="sep" style="left:51.5px;top:159.2px;width:498px;"></div>
<span class="t" style="left:55.50px;top:174.50px;color:#f6f6f6;letter-spacing:-0.004px;">Insert Silence...</span>
<span class="t" style="left:55.50px;top:210.50px;color:#7c7c7c;letter-spacing:-0.119px;">Delete</span>
<span class="t" style="left:55.50px;top:246.50px;color:#7c7c7c;letter-spacing:0.180px;">Trim</span>
<span class="t" style="right:19.2px;top:246.50px;color:#7c7c7c;word-spacing:2.5px;">⌘ T</span>
<div class="sep" style="left:51.5px;top:283.2px;width:498px;"></div>
<span class="t" style="left:55.50px;top:298.50px;color:#f6f6f6;letter-spacing:-0.001px;">Copy Into New Sample</span>
<span class="t" style="left:55.50px;top:334.50px;color:#f6f6f6;letter-spacing:-0.004px;">Copy Into New Instrument</span>
<span class="t" style="right:19.2px;top:334.50px;color:#f6f6f6;">⌘<span style="position:static;display:inline-block;transform:scaleX(1.7);margin:0 3.7px 0 4.7px;">⇧</span>⌥ C</span>
<div class="sep" style="left:51.5px;top:371.2px;width:498px;"></div>
<span class="t" style="left:55.50px;top:386.50px;color:#f6f6f6;">Load Sample...</span>
<span class="t" style="right:17.3px;top:386.50px;color:#f6f6f6;">⌥ O</span>
<span class="t" style="left:55.50px;top:422.50px;color:#f6f6f6;letter-spacing:-0.060px;">Save Sample...</span>
<div class="sep" style="left:51.5px;top:459.2px;width:498px;"></div>
<span class="t" style="left:55.50px;top:474.50px;color:#f6f6f6;letter-spacing:0.075px;">Adjust Sample Format...</span>
<div class="sep" style="left:51.5px;top:511.2px;width:498px;"></div>
<span class="t" style="left:55.50px;top:526.50px;color:#f6f6f6;letter-spacing:0.181px;">Select All</span>
<span class="t" style="right:19.2px;top:526.50px;color:#f6f6f6;word-spacing:2.5px;">⌘ A</span>
<span class="t" style="left:55.50px;top:562.50px;color:#f6f6f6;letter-spacing:0.007px;">Select Loop</span>
<span class="t" style="right:19.2px;top:562.50px;color:#f6f6f6;word-spacing:2.5px;">⌘ U</span>
<span class="t" style="left:55.50px;top:598.50px;color:#7c7c7c;letter-spacing:0.048px;">Select Current Slice</span>
<div class="sep" style="left:51.5px;top:635.2px;width:498px;"></div>
<span class="t" style="left:55.50px;top:650.50px;color:#f6f6f6;letter-spacing:-0.371px;">Process</span>
<svg style="left:534.0px;top:655.0px;" width="10" height="13" viewBox="0 0 10 13"><path d="M0.3 0.3 L9.4 6.4 L0.3 12.5 Z" fill="#f0f0f0"/></svg>
<div class="sep" style="left:51.5px;top:687.2px;width:498px;"></div>
<span class="t" style="left:55.50px;top:702.50px;color:#f6f6f6;letter-spacing:0.198px;">Slices</span>
<svg style="left:534.0px;top:707.0px;" width="10" height="13" viewBox="0 0 10 13"><path d="M0.3 0.3 L9.4 6.4 L0.3 12.5 Z" fill="#f0f0f0"/></svg>
<div class="sep" style="left:51.5px;top:739.2px;width:498px;"></div>
<span class="t" style="left:55.50px;top:754.50px;color:#f6f6f6;letter-spacing:-0.032px;">Zoom</span>
<svg style="left:534.0px;top:759.0px;" width="10" height="13" viewBox="0 0 10 13"><path d="M0.3 0.3 L9.4 6.4 L0.3 12.5 Z" fill="#f0f0f0"/></svg>
<div class="sep" style="left:51.5px;top:791.2px;width:498px;"></div>
<span class="t" style="left:55.80000000000001px;top:806.50px;color:#f6f6f6;">∿</span>
<span class="t" style="left:78.80px;top:806.50px;color:#f6f6f6;letter-spacing:0.006px;">ModFXRender (Direct Rendering)...</span>
<div class="sep" style="left:51.5px;top:843.2px;width:498px;"></div>
<span class="t" style="left:55.80000000000001px;top:858.50px;color:#f6f6f6;">∿</span>
<span class="t" style="left:78.80px;top:858.50px;color:#f6f6f6;letter-spacing:0.028px;">Almost Drums NG</span>
<div class="sep" style="left:51.5px;top:895.2px;width:498px;"></div>
<span class="t" style="left:55.80000000000001px;top:910.50px;color:#f6f6f6;">∿</span>
<span class="t" style="left:78.80px;top:910.50px;color:#f6f6f6;letter-spacing:-0.160px;">Generate Waveform</span>
<div class="sep" style="left:51.5px;top:947.2px;width:498px;"></div>
<div style="left:8.0px;top:955.7px;width:541.5px;height:35.4px;background:#ee6c33;border-radius:5px;border:1px solid #cf5a26;"></div>
<span class="t" style="left:55.80000000000001px;top:962.50px;color:#151515;">∿</span>
<span class="t" style="left:78.80px;top:962.50px;color:#151515;letter-spacing:0.010px;">Paketti..</span>
<svg style="left:534.0px;top:967.0px;" width="10" height="13" viewBox="0 0 10 13"><path d="M0.3 0.3 L9.4 6.4 L0.3 12.5 Z" fill="#151515"/></svg>
</div>
<div class="menu" style="left:971px;top:97px;width:584px;height:1529.3px;">
<div style="left:43.39999999999998px;top:4.5px;width:1px;height:1516.8px;background:#242424;"></div>
<span class="t" style="left:56.299999999999955px;top:15.00px;color:#f6f6f6;">∿</span>
<span class="t" style="left:79.10px;top:15.00px;color:#f6f6f6;letter-spacing:0.084px;">Selected Sample</span>
<svg style="left:559.5px;top:19.5px;" width="10" height="13" viewBox="0 0 10 13"><path d="M0.3 0.3 L9.4 6.4 L0.3 12.5 Z" fill="#f0f0f0"/></svg>
<span class="t" style="left:56.299999999999955px;top:51.00px;color:#f6f6f6;">∿</span>
<span class="t" style="left:79.10px;top:51.00px;color:#f6f6f6;letter-spacing:-0.019px;">Paketti eSpeak Text-to-Speech</span>
<div class="sep" style="left:52px;top:87.7px;width:522px;"></div>
<span class="t" style="left:56.299999999999955px;top:103.00px;color:#f6f6f6;">∿</span>
<span class="t" style="left:79.10px;top:103.00px;color:#f6f6f6;letter-spacing:-0.169px;">Create Phrase</span>
<span class="t" style="left:56.299999999999955px;top:139.00px;color:#f6f6f6;">∿</span>
<span class="t" style="left:79.10px;top:139.00px;color:#f6f6f6;letter-spacing:0.040px;">App Selection &amp; Smart Folders</span>
<div style="left:8px;top:168.2px;width:566px;height:35.4px;background:#ee6c33;border-radius:5px;border:1px solid #cf5a26;"></div>
<span class="t" style="left:56.299999999999955px;top:175.00px;color:#151515;">∿</span>
<span class="t" style="left:79.10px;top:175.00px;color:#151515;letter-spacing:0.025px;">Save Sample to Smart/Backup Folder 1</span>
<span class="t" style="left:56.299999999999955px;top:211.00px;color:#f6f6f6;">∿</span>
<span class="t" style="left:79.10px;top:211.00px;color:#f6f6f6;letter-spacing:0.029px;">Save Sample to Smart/Backup Folder 2</span>
<span class="t" style="left:56.299999999999955px;top:247.00px;color:#f6f6f6;">∿</span>
<span class="t" style="left:79.10px;top:247.00px;color:#f6f6f6;letter-spacing:0.000px;">Save Sample to Smart/Backup Folder 3</span>
<span class="t" style="left:56.299999999999955px;top:283.00px;color:#f6f6f6;">∿</span>
<span class="t" style="left:79.10px;top:283.00px;color:#f6f6f6;letter-spacing:-0.051px;">Create New Instrument &amp; Loop from Selection</span>
<span class="t" style="left:56.299999999999955px;top:319.00px;color:#f6f6f6;">∿</span>
<span class="t" style="left:79.10px;top:319.00px;color:#f6f6f6;letter-spacing:-0.084px;">Copy Sample in Note-On to Note-Off Layer +24</span>
<span class="t" style="left:56.299999999999955px;top:355.00px;color:#f6f6f6;">∿</span>
<span class="t" style="left:79.10px;top:355.00px;color:#f6f6f6;letter-spacing:-0.088px;">Copy Sample in Note-On to Note-Off Layer +12</span>
<span class="t" style="left:56.299999999999955px;top:391.00px;color:#f6f6f6;">∿</span>
<span class="t" style="left:79.10px;top:391.00px;color:#f6f6f6;letter-spacing:-0.101px;">Copy Sample in Note-On to Note-Off Layer</span>
<span class="t" style="left:56.299999999999955px;top:427.00px;color:#f6f6f6;">∿</span>
<span class="t" style="left:79.10px;top:427.00px;color:#f6f6f6;letter-spacing:-0.108px;">Copy Sample in Note-On to Note-Off Layer -12</span>
<span class="t" style="left:56.299999999999955px;top:463.00px;color:#f6f6f6;">∿</span>
<span class="t" style="left:79.10px;top:463.00px;color:#f6f6f6;letter-spacing:-0.105px;">Copy Sample in Note-On to Note-Off Layer -24</span>
<span class="t" style="left:56.299999999999955px;top:499.00px;color:#f6f6f6;">∿</span>
<span class="t" style="left:79.10px;top:499.00px;color:#f6f6f6;letter-spacing:0.039px;">Add 84 Sample Slots to Instrument</span>
<div class="sep" style="left:52px;top:535.7px;width:522px;"></div>
<span class="t" style="left:56.299999999999955px;top:551.00px;color:#f6f6f6;">∿</span>
<span class="t" style="left:79.10px;top:551.00px;color:#f6f6f6;letter-spacing:0.131px;">Wipe Slices</span>
<span class="t" style="left:56.299999999999955px;top:587.00px;color:#f6f6f6;">∿</span>
<span class="t" style="left:79.10px;top:587.00px;color:#f6f6f6;letter-spacing:-0.031px;">Wipe&amp;Create Slices (2)</span>
<span class="t" style="left:56.299999999999955px;top:623.00px;color:#f6f6f6;">∿</span>
<span class="t" style="left:79.10px;top:623.00px;color:#f6f6f6;letter-spacing:-0.031px;">Wipe&amp;Create Slices (4)</span>
<span class="t" style="left:56.299999999999955px;top:659.00px;color:#f6f6f6;">∿</span>
<span class="t" style="left:79.10px;top:659.00px;color:#f6f6f6;letter-spacing:-0.031px;">Wipe&amp;Create Slices (8)</span>
<span class="t" style="left:56.299999999999955px;top:695.00px;color:#f6f6f6;">∿</span>
<span class="t" style="left:79.10px;top:695.00px;color:#f6f6f6;letter-spacing:0.022px;">Wipe&amp;Create Slices (16)</span>
<span class="t" style="left:56.299999999999955px;top:731.00px;color:#f6f6f6;">∿</span>
<span class="t" style="left:79.10px;top:731.00px;color:#f6f6f6;letter-spacing:0.022px;">Wipe&amp;Create Slices (32)</span>
<span class="t" style="left:56.299999999999955px;top:767.00px;color:#f6f6f6;">∿</span>
<span class="t" style="left:79.10px;top:767.00px;color:#f6f6f6;letter-spacing:0.022px;">Wipe&amp;Create Slices (64)</span>
<span class="t" style="left:56.299999999999955px;top:803.00px;color:#f6f6f6;">∿</span>
<span class="t" style="left:79.10px;top:803.00px;color:#f6f6f6;letter-spacing:-0.005px;">Wipe&amp;Create Slices (128)</span>
<div class="sep" style="left:52px;top:839.7px;width:522px;"></div>
<span class="t" style="left:56.299999999999955px;top:855.00px;color:#f6f6f6;">∿</span>
<span class="t" style="left:79.10px;top:855.00px;color:#f6f6f6;letter-spacing:0.001px;">Double BeatSync Line</span>
<span class="t" style="left:56.299999999999955px;top:891.00px;color:#f6f6f6;">∿</span>
<span class="t" style="left:79.10px;top:891.00px;color:#f6f6f6;letter-spacing:-0.063px;">Halve BeatSync Line</span>
<div class="sep" style="left:52px;top:927.7px;width:522px;"></div>
<span class="t" style="left:56.299999999999955px;top:943.00px;color:#f6f6f6;">∿</span>
<span class="t" style="left:79.10px;top:943.00px;color:#f6f6f6;letter-spacing:-0.042px;">Paketti Save Selected Sample .WAV</span>
<span class="t" style="left:56.299999999999955px;top:979.00px;color:#f6f6f6;">∿</span>
<span class="t" style="left:79.10px;top:979.00px;color:#f6f6f6;letter-spacing:-0.015px;">Paketti Save Selected Sample .FLAC</span>
<div class="sep" style="left:52px;top:1015.7px;width:522px;"></div>
<span class="t" style="left:56.299999999999955px;top:1031.00px;color:#f6f6f6;">∿</span>
<span class="t" style="left:79.10px;top:1031.00px;color:#f6f6f6;letter-spacing:0.120px;">Start Sampling (Record)</span>
<span class="t" style="left:56.299999999999955px;top:1067.00px;color:#f6f6f6;">∿</span>
<span class="t" style="left:79.10px;top:1067.00px;color:#f6f6f6;letter-spacing:-0.100px;">Record to Current Track</span>
<span class="t" style="left:56.299999999999955px;top:1103.00px;color:#f6f6f6;">∿</span>
<span class="t" style="left:79.10px;top:1103.00px;color:#f6f6f6;letter-spacing:-0.045px;">Unison Generator</span>
<span class="t" style="left:56.299999999999955px;top:1139.00px;color:#f6f6f6;">∿</span>
<span class="t" style="left:79.10px;top:1139.00px;color:#f6f6f6;letter-spacing:0.030px;">Open Coluga Dialog</span>
<div class="sep" style="left:52px;top:1175.7px;width:522px;"></div>
<span class="t" style="left:56.299999999999955px;top:1191.00px;color:#f6f6f6;">∿</span>
<span class="t" style="left:79.10px;top:1191.00px;color:#f6f6f6;letter-spacing:0.034px;">Set Selected Instrument Velocity Tracking On</span>
<span class="t" style="left:56.299999999999955px;top:1227.00px;color:#f6f6f6;">∿</span>
<span class="t" style="left:79.10px;top:1227.00px;color:#f6f6f6;letter-spacing:-0.016px;">Set Selected Instrument Velocity Tracking Off</span>
<div class="sep" style="left:52px;top:1263.7px;width:522px;"></div>
<span class="t" style="left:56.299999999999955px;top:1279.00px;color:#f6f6f6;">∿</span>
<span class="t" style="left:79.10px;top:1279.00px;color:#f6f6f6;letter-spacing:-0.179px;">Convert Mono to Stereo</span>
<span class="t" style="left:56.299999999999955px;top:1315.00px;color:#f6f6f6;">∿</span>
<span class="t" style="left:79.10px;top:1315.00px;color:#f6f6f6;letter-spacing:0.047px;">Mono to Left with Blank Right</span>
<span class="t" style="left:56.299999999999955px;top:1351.00px;color:#f6f6f6;">∿</span>
<span class="t" style="left:79.10px;top:1351.00px;color:#f6f6f6;letter-spacing:0.047px;">Mono to Right with Blank Left</span>
<div class="sep" style="left:52px;top:1387.7px;width:522px;"></div>
<span class="t" style="left:56.299999999999955px;top:1403.00px;color:#f6f6f6;">∿</span>
<span class="t" style="left:79.10px;top:1403.00px;color:#f6f6f6;letter-spacing:-0.031px;">Isolate Slices to New Instruments</span>
<div class="sep" style="left:52px;top:1439.7px;width:522px;"></div>
<span class="t" style="left:56.299999999999955px;top:1455.00px;color:#f6f6f6;">∿</span>
<span class="t" style="left:79.10px;top:1455.00px;color:#f6f6f6;letter-spacing:-0.112px;">Import Selected Sample to Convolver</span>
<span class="t" style="left:56.299999999999955px;top:1491.00px;color:#f6f6f6;">∿</span>
<span class="t" style="left:79.10px;top:1491.00px;color:#f6f6f6;letter-spacing:-0.008px;">Show Convolver Selection Dialog</span>
</div>
</div></body></html>
